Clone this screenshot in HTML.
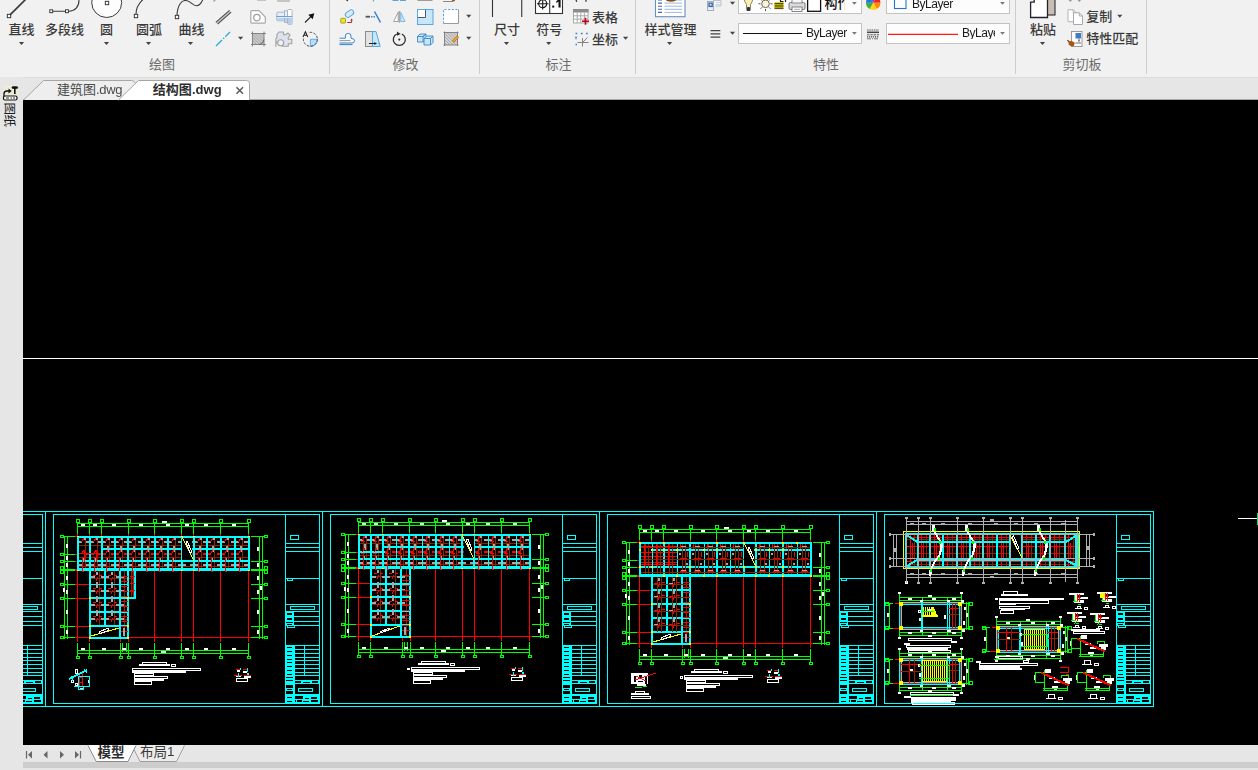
<!DOCTYPE html>
<html lang="zh"><head><meta charset="utf-8"><title>结构图.dwg</title>
<style>
html,body{margin:0;padding:0}
body{width:1258px;height:770px;overflow:hidden;position:relative;background:#e6e6e6;font-family:"Liberation Sans",sans-serif;font-size:12px;color:#222}
#ribbon{position:absolute;left:0;top:0;width:1258px;height:78px;background:#f1f1f1;border-bottom:1px solid #dcdcdc;box-sizing:border-box}
#tabs{position:absolute;left:0;top:78px;width:1258px;height:22px;background:#e6e6e6;border-bottom:1px solid #a8a8a8;box-sizing:border-box}
#side{position:absolute;left:0;top:77px;width:23px;height:693px;background:#e6e6e6}
#canvas{position:absolute;left:23px;top:100px;width:1235px;height:645px;background:#000}
#bottom{position:absolute;left:0;top:745px;width:1258px;height:25px;background:#e6e6e6}
#hscroll{position:absolute;left:23px;top:762px;width:1235px;height:6px;background:#cdcdcd}
svg.ov{position:absolute;left:0;top:0;pointer-events:none}
svg.ov text{font-family:"Liberation Sans","Noto Sans CJK SC",sans-serif}
.t{position:absolute;white-space:nowrap;line-height:1;will-change:transform}
.h{position:absolute;white-space:nowrap;color:transparent;font-size:13px;line-height:1;overflow:hidden}
</style></head><body>
<div id="ribbon"></div><div id="tabs"></div><div id="side"></div>
<div id="canvas"></div>
<div id="bottom"><div id="hscroll" style="top:17px"></div></div>
<svg class="ov" width="1258" height="770" viewBox="0 0 1258 770" shape-rendering="crispEdges">
<path d="M23 511.5H1154M23 706.5H1154M23 514.5H43M23 703.5H43M42.5 514V704M23 543.5H43M23 547.5H43M23 551.5H43M23 578.5H43M23 604.5H43M23 611.5H43M23 616.5H43M23 621.5H43M23 625.5H43M23 645.5H43M23 606.5H38M23 609.5H38M37.5 606V610M23 645.5H43M23 649.5H43M23 653.5H43M23 657.5H43M23 660.5H43M23 664.5H43M23 668.5H43M23 672.5H43M23 675.5H43M27.5 645V676M23 680.5H43M23 683.5H43M23 688.5H36M23 691.5H36M35.5 688V692M23 694.5H43M23 695.5H43M45.5 511V707M53 514.5H320M53 703.5H320M53.5 514V704M319.5 514V704M285.5 514V704M285 543.5H320M285 547.5H320M285 551.5H320M285 578.5H320M285 604.5H320M285 611.5H320M285 616.5H320M285 621.5H320M285 625.5H320M285 645.5H320M290.5 535.5H298.5V539.5H290.5ZM287.5 578.5H292.5V580.5H287.5ZM290.5 606.5H314.5V609.5H290.5ZM287.5 625.5H294.5V627.5H287.5ZM294 645.5H320M294 649.5H320M294 653.5H320M294 657.5H320M294 660.5H320M294 664.5H320M294 668.5H320M294 672.5H320M294 675.5H320M294.5 645V704M304.5 645V676M294 680.5H320M294 683.5H320M298.5 688.5H312.5V691.5H298.5ZM294 694.5H320M294 695.5H320M322.5 511V707M330 514.5H597M330 703.5H597M330.5 514V704M596.5 514V704M562.5 514V704M562 543.5H597M562 547.5H597M562 551.5H597M562 578.5H597M562 604.5H597M562 611.5H597M562 616.5H597M562 621.5H597M562 625.5H597M562 645.5H597M567.5 535.5H575.5V539.5H567.5ZM564.5 578.5H569.5V580.5H564.5ZM567.5 606.5H591.5V609.5H567.5ZM564.5 625.5H571.5V627.5H564.5ZM571 645.5H597M571 649.5H597M571 653.5H597M571 657.5H597M571 660.5H597M571 664.5H597M571 668.5H597M571 672.5H597M571 675.5H597M571.5 645V704M581.5 645V676M571 680.5H597M571 683.5H597M575.5 688.5H589.5V691.5H575.5ZM571 694.5H597M571 695.5H597M599.5 511V707M607 514.5H874M607 703.5H874M607.5 514V704M873.5 514V704M839.5 514V704M839 543.5H874M839 547.5H874M839 551.5H874M839 578.5H874M839 604.5H874M839 611.5H874M839 616.5H874M839 621.5H874M839 625.5H874M839 645.5H874M844.5 535.5H852.5V539.5H844.5ZM841.5 578.5H846.5V580.5H841.5ZM844.5 606.5H868.5V609.5H844.5ZM841.5 625.5H848.5V627.5H841.5ZM848 645.5H874M848 649.5H874M848 653.5H874M848 657.5H874M848 660.5H874M848 664.5H874M848 668.5H874M848 672.5H874M848 675.5H874M848.5 645V704M858.5 645V676M848 680.5H874M848 683.5H874M852.5 688.5H866.5V691.5H852.5ZM848 694.5H874M848 695.5H874M876.5 511V707M884 514.5H1151M884 703.5H1151M884.5 514V704M1150.5 514V704M1116.5 514V704M1116 543.5H1151M1116 547.5H1151M1116 551.5H1151M1116 578.5H1151M1116 604.5H1151M1116 611.5H1151M1116 616.5H1151M1116 621.5H1151M1116 625.5H1151M1116 645.5H1151M1121.5 535.5H1129.5V539.5H1121.5ZM1118.5 578.5H1123.5V580.5H1118.5ZM1121.5 606.5H1145.5V609.5H1121.5ZM1118.5 625.5H1125.5V627.5H1118.5ZM1125 645.5H1151M1125 649.5H1151M1125 653.5H1151M1125 657.5H1151M1125 660.5H1151M1125 664.5H1151M1125 668.5H1151M1125 672.5H1151M1125 675.5H1151M1125.5 645V704M1135.5 645V676M1125 680.5H1151M1125 683.5H1151M1129.5 688.5H1143.5V691.5H1129.5ZM1125 694.5H1151M1125 695.5H1151M1153.5 511V707" stroke="#00ffff" stroke-width="1" fill="none"/>
<path d="M23 681H42V683H23ZM23 695H42V703H23ZM285 611H294V626H285ZM285 645H294V684H285ZM294 681H319V683H294ZM285 684H294V704H285ZM294 695H319V703H294ZM562 611H571V626H562ZM562 645H571V684H562ZM571 681H596V683H571ZM562 684H571V704H562ZM571 695H596V703H571ZM839 611H848V626H839ZM839 645H848V684H839ZM848 681H873V683H848ZM839 684H848V704H839ZM848 695H873V703H848ZM1116 611H1125V626H1116ZM1116 645H1125V684H1116ZM1125 681H1150V683H1125ZM1116 684H1125V704H1116ZM1125 695H1150V703H1125Z" fill="#00ffff"/>
<path d="M23 681H24V683H23ZM26 682H33V683H26ZM35 681H41V683H35ZM23 696H26V699H23ZM34 697H40V699H34ZM28 698H32V699H28ZM23 700H25V702H23ZM26 701H32V702H26ZM34 700H41V702H34ZM287 613H292V615H287ZM287 618H292V620H287ZM286 622H293V623H286ZM287 624H292V625H287ZM287 647H292V648H287ZM287 651H292V652H287ZM287 655H292V656H287ZM287 659H292V660H287ZM287 662H292V663H287ZM287 666H292V667H287ZM287 670H292V671H287ZM287 674H292V675H287ZM286 677H293V678H286ZM286 680H293V681H286ZM295 681H301V683H295ZM303 682H310V683H303ZM312 681H318V683H312ZM286 685H293V688H286ZM287 689H292V690H287ZM286 691H293V694H286ZM287 697H292V698H287ZM287 701H292V702H287ZM295 696H303V699H295ZM311 697H317V699H311ZM305 698H309V699H305ZM295 700H296V702H295ZM297 700H302V702H297ZM303 701H309V702H303ZM311 700H318V702H311ZM564 613H569V615H564ZM564 618H569V620H564ZM563 622H570V623H563ZM564 624H569V625H564ZM564 647H569V648H564ZM564 651H569V652H564ZM564 655H569V656H564ZM564 659H569V660H564ZM564 662H569V663H564ZM564 666H569V667H564ZM564 670H569V671H564ZM564 674H569V675H564ZM563 677H570V678H563ZM563 680H570V681H563ZM572 681H578V683H572ZM580 682H587V683H580ZM589 681H595V683H589ZM563 685H570V688H563ZM564 689H569V690H564ZM563 691H570V694H563ZM564 697H569V698H564ZM564 701H569V702H564ZM572 696H580V699H572ZM588 697H594V699H588ZM582 698H586V699H582ZM572 700H573V702H572ZM574 700H579V702H574ZM580 701H586V702H580ZM588 700H595V702H588ZM841 613H846V615H841ZM841 618H846V620H841ZM840 622H847V623H840ZM841 624H846V625H841ZM841 647H846V648H841ZM841 651H846V652H841ZM841 655H846V656H841ZM841 659H846V660H841ZM841 662H846V663H841ZM841 666H846V667H841ZM841 670H846V671H841ZM841 674H846V675H841ZM840 677H847V678H840ZM840 680H847V681H840ZM849 681H855V683H849ZM857 682H864V683H857ZM866 681H872V683H866ZM840 685H847V688H840ZM841 689H846V690H841ZM840 691H847V694H840ZM841 697H846V698H841ZM841 701H846V702H841ZM849 696H857V699H849ZM865 697H871V699H865ZM859 698H863V699H859ZM849 700H850V702H849ZM851 700H856V702H851ZM857 701H863V702H857ZM865 700H872V702H865ZM1118 613H1123V615H1118ZM1118 618H1123V620H1118ZM1117 622H1124V623H1117ZM1118 624H1123V625H1118ZM1118 647H1123V648H1118ZM1118 651H1123V652H1118ZM1118 655H1123V656H1118ZM1118 659H1123V660H1118ZM1118 662H1123V663H1118ZM1118 666H1123V667H1118ZM1118 670H1123V671H1118ZM1118 674H1123V675H1118ZM1117 677H1124V678H1117ZM1117 680H1124V681H1117ZM1126 681H1132V683H1126ZM1134 682H1141V683H1134ZM1143 681H1149V683H1143ZM1117 685H1124V688H1117ZM1118 689H1123V690H1118ZM1117 691H1124V694H1117ZM1118 697H1123V698H1118ZM1118 701H1123V702H1118ZM1126 696H1134V699H1126ZM1142 697H1148V699H1142ZM1136 698H1140V699H1136ZM1126 700H1127V702H1126ZM1128 700H1133V702H1128ZM1134 701H1140V702H1134ZM1142 700H1149V702H1142Z" fill="#000000"/>
<path d="M77 523.5H249M77 526.5H249M77.5 523V534M76.5 519.5H79.5V522.5H76.5ZM89.5 523V534M88.5 519.5H91.5V522.5H88.5ZM101.5 523V534M100.5 519.5H103.5V522.5H100.5ZM128.5 523V534M127.5 519.5H130.5V522.5H127.5ZM154.5 523V534M153.5 519.5H156.5V522.5H153.5ZM181.5 523V534M180.5 519.5H183.5V522.5H180.5ZM193.5 523V534M192.5 519.5H195.5V522.5H192.5ZM220.5 523V534M219.5 519.5H222.5V522.5H219.5ZM248.5 523V534M247.5 519.5H250.5V522.5H247.5ZM77 650.5H249M77 653.5H249M77.5 643V656M76.5 656.5H79.5V658.5H76.5ZM89.5 643V656M88.5 656.5H91.5V658.5H88.5ZM120.5 643V656M119.5 656.5H122.5V658.5H119.5ZM128.5 643V656M127.5 656.5H130.5V658.5H127.5ZM154.5 643V656M153.5 656.5H156.5V658.5H153.5ZM181.5 643V656M180.5 656.5H183.5V658.5H180.5ZM193.5 643V656M192.5 656.5H195.5V658.5H192.5ZM220.5 643V656M219.5 656.5H222.5V658.5H219.5ZM248.5 643V656M247.5 656.5H250.5V658.5H247.5ZM122.5 643V652M126.5 643V652M64.5 536V639M67.5 536V639M64 536.5H75M60.5 535.5H63.5V537.5H60.5ZM64 554.5H75M60.5 553.5H63.5V555.5H60.5ZM64 561.5H75M60.5 560.5H63.5V562.5H60.5ZM60.5 566.5H63.5V569.5H60.5ZM60.5 570.5H63.5V573.5H60.5ZM64 584.5H75M60.5 583.5H63.5V585.5H60.5ZM64 598.5H75M60.5 597.5H63.5V599.5H60.5ZM64 626.5H75M60.5 625.5H63.5V627.5H60.5ZM64 637.5H75M60.5 636.5H63.5V638.5H60.5ZM259.5 536V639M262.5 536V639M251 536.5H264M264.5 535.5H267.5V537.5H264.5ZM251 561.5H264M264.5 560.5H267.5V562.5H264.5ZM264.5 566.5H267.5V569.5H264.5ZM264.5 570.5H267.5V573.5H264.5ZM251 584.5H264M264.5 583.5H267.5V585.5H264.5ZM251 598.5H264M264.5 597.5H267.5V599.5H264.5ZM251 626.5H264M264.5 625.5H267.5V627.5H264.5ZM251 637.5H264M264.5 636.5H267.5V638.5H264.5Z" stroke="#00ff00" stroke-width="1" fill="none"/>
<path d="M77.5 534V536M89.5 534V536M101.5 534V536M128.5 534V536M154.5 534V536M181.5 534V536M193.5 534V536M220.5 534V536M248.5 534V536M77.5 638V642M89.5 638V642M120.5 638V642M128.5 638V642M154.5 638V642M181.5 638V642M193.5 638V642M220.5 638V642M248.5 638V642M75 536.5H78M75 554.5H78M75 561.5H78M75 584.5H78M75 598.5H78M75 626.5H78M75 637.5H78M77.5 570V642M154.5 570V642M181.5 570V642M193.5 570V642M220.5 570V642M248.5 570V642M75 637.5H251M75 584.5H89M75 598.5H89M75 626.5H89" stroke="#ff0000" stroke-width="1" fill="none"/>
<path d="M81 524H85V526H81ZM93 524H97V526H93ZM112 524H116V526H112ZM139 524H143V526H139ZM166 524H170V526H166ZM185 524H189V526H185ZM204 524H208V526H204ZM232 524H236V526H232ZM162 521H167V523H162ZM81 648H85V650H81ZM102 648H106V650H102ZM122 648H126V650H122ZM139 648H143V650H139ZM166 648H170V650H166ZM185 648H189V650H185ZM204 648H208V650H204ZM232 648H236V650H232ZM161 651H166V653H161ZM66 544H68V548H66ZM66 556H68V560H66ZM66 563H68V567H66ZM66 576H68V580H66ZM66 590H68V594H66ZM66 610H68V614H66ZM66 630H68V634H66ZM63 588H65V592H63ZM257 547H259V551H257ZM257 563H259V567H257ZM257 576H259V580H257ZM257 590H259V594H257ZM257 610H259V614H257ZM257 630H259V634H257ZM257 563H259V567H257ZM260 586H262V590H260Z" fill="#ffffff"/>
<path d="M61 569H75V571H61ZM251 569H266V571H251Z" fill="#00ff00"/>
<path d="M75 569H77V571H75Z" fill="#ff0000"/>
<path d="M77 545.5H250M77 557.5H250M77 566.5H250M85.5 536V568M97.5 536V568M109.5 536V568M122.5 536V568M135.5 536V568M149.5 536V568M162.5 536V568M175.5 536V568M201.5 536V568M214.5 536V568M228.5 536V568M242.5 536V568" stroke="#8b2500" stroke-width="1" fill="none"/>
<path d="M86 541H94V543H86ZM86 564H94V566H86ZM98 541H106V543H98ZM98 564H106V566H98ZM111 541H119V543H111ZM111 564H119V566H111ZM124 541H132V543H124ZM124 564H132V566H124ZM138 541H146V543H138ZM138 564H146V566H138ZM151 541H159V543H151ZM151 564H159V566H151ZM164 541H172V543H164ZM164 564H172V566H164ZM178 541H186V543H178ZM178 564H186V566H178ZM190 541H198V543H190ZM190 564H198V566H190ZM203 541H211V543H203ZM203 564H211V566H203ZM217 541H225V543H217ZM217 564H225V566H217ZM231 541H239V543H231ZM231 564H239V566H231ZM78 541H82V543H78ZM244 541H249V543H244ZM78 564H82V566H78ZM244 564H249V566H244ZM83 558H84V560H83ZM95 558H96V560H95ZM107 558H108V560H107ZM120 558H121V560H120ZM133 558H134V560H133ZM147 558H148V560H147ZM160 558H161V560H160ZM173 558H174V560H173ZM199 558H200V560H199ZM212 558H213V560H212ZM226 558H227V560H226ZM240 558H241V560H240Z" fill="#a8a8a8"/>
<path d="M86 553H94V555H86ZM98 553H106V555H98ZM111 553H119V555H111ZM124 553H132V555H124ZM138 553H146V555H138ZM151 553H159V555H151ZM164 553H172V555H164ZM178 553H186V555H178ZM190 553H198V555H190ZM203 553H211V555H203ZM217 553H225V555H217ZM231 553H239V555H231Z" fill="#ff0000"/>
<path d="M77 537H250M102 549H250M77 561H250M78 536V571M90 536V571M102 536V571M115 536V571M128 536V571M142 536V571M155 536V571M168 536V571M182 536V571M194 536V571M207 536V571M221 536V571M235 536V571M249 536V571" stroke="#00ffff" stroke-width="2" fill="none"/>
<path d="M77 569.5H250" stroke="#00ffff" stroke-width="3" fill="none"/>
<path d="M182 538H192V560H182Z" fill="#000000"/>
<path d="M182 537L194 561" stroke="#ffff00" stroke-width="1" fill="none"/>
<path d="M186 542L187 541L192 552L190 553Z" stroke="#ffffff" stroke-width="1" fill="none"/>
<path d="M84 538H86V540H84ZM96 538H98V540H96ZM107 546H109V552H107ZM108 538H110V540H108ZM120 546H122V552H120ZM121 538H123V540H121ZM133 546H135V552H133ZM134 538H136V540H134ZM147 546H149V552H147ZM148 538H150V540H148ZM160 546H162V552H160ZM161 538H163V540H161ZM173 546H175V552H173ZM174 538H176V540H174ZM199 546H201V552H199ZM200 538H202V540H200ZM212 546H214V552H212ZM213 538H215V540H213ZM226 546H228V552H226ZM227 538H229V540H227ZM240 546H242V552H240ZM241 538H243V540H241Z" fill="#a8a8a8"/>
<path d="M81.5 542L84 538M81.5 554L84 550M82.5 557V572M93.5 542L96 538M93.5 554L96 550M94.5 557V572M105.5 542L108 538M105.5 554L108 550M106.5 557V572M118.5 542L121 538M118.5 554L121 550M119.5 557V572M131.5 542L134 538M131.5 554L134 550M132.5 557V572M145.5 542L148 538M145.5 554L148 550M146.5 557V572M158.5 542L161 538M158.5 554L161 550M159.5 557V572M171.5 542L174 538M171.5 554L174 550M172.5 557V572M197.5 542L200 538M197.5 554L200 550M198.5 557V572M210.5 542L213 538M210.5 554L213 550M211.5 557V572M224.5 542L227 538M224.5 554L227 550M225.5 557V572M238.5 542L241 538M238.5 554L241 550M239.5 557V572M79 553.5H101M84.5 550V562M96.5 550V562" stroke="#ff0000" stroke-width="1" fill="none"/>
<path d="M82 571H84V572H82ZM94 571H96V572H94ZM106 571H108V572H106ZM119 571H121V572H119ZM132 571H134V572H132ZM146 571H148V572H146ZM159 571H161V572H159ZM172 571H174V572H172ZM198 571H200V572H198ZM211 571H213V572H211ZM225 571H227V572H225ZM239 571H241V572H239Z" fill="#ff0000"/>
<path d="M77 536H79V537H77ZM77 570H79V571H77ZM101 536H103V537H101ZM101 570H103V571H101ZM181 536H183V537H181ZM181 570H183V571H181ZM193 536H195V537H193ZM193 570H195V571H193ZM248 536H250V537H248ZM248 570H250V571H248Z" fill="#ffff00"/>
<path d="M89 578.5H129M89 591.5H129M89 605.5H129M89 619.5H129M99.5 571V626M114.5 571V626M124.5 571V639M131.5 571V598M128 578.5H136M128 591.5H136" stroke="#8b2500" stroke-width="1" fill="none"/>
<path d="M91 576H95V578H91ZM101 576H109V578H101ZM116 576H124V578H116ZM91 590H95V592H91ZM101 590H109V592H101ZM116 590H124V592H116ZM91 604H95V606H91ZM101 604H109V606H101ZM116 604H124V606H116ZM91 618H95V620H91ZM101 618H109V620H101ZM116 618H124V620H116Z" fill="#a8a8a8"/>
<path d="M90 571V639M105 571V639M120 571V639M128 571V639M89 598H129M89 612H129M89 626H129M89 638H129M135 571V599M128 598H136" stroke="#00ffff" stroke-width="2" fill="none"/>
<path d="M89 584.5H129" stroke="#00ffff" stroke-width="1" fill="none"/>
<path d="M130 576.5H135M130 583.5H135M130 590.5H135M133.5 571V597" stroke="#ff0000" stroke-width="1" fill="none"/>
<path d="M91 627H119V637H91Z" fill="#000000"/>
<path d="M91 636L119 628" stroke="#ffff00" stroke-width="1" fill="none"/>
<path d="M99 632L108 628L109 630L100 634Z" stroke="#ffffff" stroke-width="1" fill="none"/>
<path d="M121 576.5H128M121 581.5H128M121 586.5H128M121 591.5H128M121 596.5H128M121 601.5H128M121 606.5H128M121 611.5H128M121 616.5H128M121 621.5H128M121 626.5H128M121 631.5H128M96 581L98 577M96 594L98 590M96 608L98 604M96 622L98 618M111 581L113 577M111 594L113 590M111 608L113 604M111 622L113 618" stroke="#ff0000" stroke-width="1" fill="none"/>
<path d="M123 628H125V636H123ZM96 572H98V575H96ZM96 582H98V588H96ZM96 596H98V602H96ZM96 610H98V616H96ZM111 572H113V575H111ZM111 582H113V588H111ZM111 596H113V602H111ZM111 610H113V616H111Z" fill="#a8a8a8"/>
<path d="M93 575H96V576H93ZM99 575H102V576H99ZM93 588H96V589H93ZM99 588H102V589H99ZM93 602H96V603H93ZM99 602H102V603H99ZM93 616H96V617H93ZM99 616H102V617H99ZM108 575H111V576H108ZM114 575H117V576H114ZM108 588H111V589H108ZM114 588H117V589H114ZM108 602H111V603H108ZM114 602H117V603H114ZM108 616H111V617H108ZM114 616H117V617H114Z" fill="#ff0000"/>
<path d="M89 597H91V599H89ZM89 625H91V627H89ZM89 637H91V639H89ZM127 597H129V599H127ZM127 625H129V627H127ZM127 637H129V639H127Z" fill="#ffff00"/>
<path d="M142.5 662.5H166.5V664.5H142.5ZM171.5 664.5H175.5V666.5H171.5ZM132.5 668.5H200.5V670.5H132.5ZM134.5 673.5H153.5V675.5H134.5ZM134.5 676.5H167.5V678.5H134.5ZM134.5 681.5H151.5V684.5H134.5ZM236.5 678.5H247.5V681.5H236.5ZM75.5 669.5H77.5V673.5H75.5ZM75.5 683.5H77.5V685.5H75.5ZM71.5 680.5H73.5V682.5H71.5Z" stroke="#ffffff" stroke-width="1" fill="none"/>
<path d="M139 664H170V666H139ZM132 671H186V673H132ZM134 678H164V681H134ZM237 670H240V672H237ZM243 671H247V673H243ZM236 676H241V677H236ZM244 676H251V678H244ZM80 688H83V690H80ZM88 680H90V683H88Z" fill="#ffffff"/>
<path d="M236 669H240V670H236ZM243 669H248V670H243ZM234 675H242V676H234ZM244 675H251V676H244ZM79 674H80V686H79ZM82 673H83V686H82ZM79 677H83V678H79ZM79 682H83V683H79Z" fill="#ff0000"/>
<path d="M240 668H241V670H240ZM247 668H248V672H247ZM238 673H239V677H238ZM247 673H249V675H247Z" fill="#00ffff"/>
<path d="M69 679L87 670" stroke="#00ffff" stroke-width="2" fill="none"/>
<path d="M71 676L73 681M84 669L87 673M78.5 676.5H89.5V686.5H78.5ZM74 686.5H79M78.5 686.5H83.5V689.5H78.5Z" stroke="#00ffff" stroke-width="1" fill="none"/>
<path d="M358 522.5H530M358 525.5H530M358.5 522V533M357.5 518.5H360.5V521.5H357.5ZM370.5 522V533M369.5 518.5H372.5V521.5H369.5ZM382.5 522V533M381.5 518.5H384.5V521.5H381.5ZM409.5 522V533M408.5 518.5H411.5V521.5H408.5ZM435.5 522V533M434.5 518.5H437.5V521.5H434.5ZM462.5 522V533M461.5 518.5H464.5V521.5H461.5ZM474.5 522V533M473.5 518.5H476.5V521.5H473.5ZM501.5 522V533M500.5 518.5H503.5V521.5H500.5ZM529.5 522V533M528.5 518.5H531.5V521.5H528.5ZM358 649.5H530M358 652.5H530M358.5 642V655M357.5 655.5H360.5V657.5H357.5ZM370.5 642V655M369.5 655.5H372.5V657.5H369.5ZM402.5 642V655M401.5 655.5H404.5V657.5H401.5ZM410.5 642V655M409.5 655.5H412.5V657.5H409.5ZM435.5 642V655M434.5 655.5H437.5V657.5H434.5ZM462.5 642V655M461.5 655.5H464.5V657.5H461.5ZM474.5 642V655M473.5 655.5H476.5V657.5H473.5ZM501.5 642V655M500.5 655.5H503.5V657.5H500.5ZM529.5 642V655M528.5 655.5H531.5V657.5H528.5ZM404.5 642V651M407.5 642V651M345.5 534V638M348.5 534V638M345 534.5H356M341.5 533.5H344.5V535.5H341.5ZM345 552.5H356M341.5 551.5H344.5V553.5H341.5ZM345 559.5H356M341.5 558.5H344.5V560.5H341.5ZM341.5 564.5H344.5V567.5H341.5ZM341.5 568.5H344.5V571.5H341.5ZM345 583.5H356M341.5 582.5H344.5V584.5H341.5ZM345 597.5H356M341.5 596.5H344.5V598.5H341.5ZM345 624.5H356M341.5 623.5H344.5V625.5H341.5ZM345 636.5H356M341.5 635.5H344.5V637.5H341.5ZM540.5 534V638M543.5 534V638M532 534.5H545M545.5 533.5H548.5V535.5H545.5ZM532 559.5H545M545.5 558.5H548.5V560.5H545.5ZM545.5 564.5H548.5V567.5H545.5ZM545.5 568.5H548.5V571.5H545.5ZM532 583.5H545M545.5 582.5H548.5V584.5H545.5ZM532 597.5H545M545.5 596.5H548.5V598.5H545.5ZM532 624.5H545M545.5 623.5H548.5V625.5H545.5ZM532 636.5H545M545.5 635.5H548.5V637.5H545.5Z" stroke="#00ff00" stroke-width="1" fill="none"/>
<path d="M358.5 533V535M370.5 533V535M382.5 533V535M409.5 533V535M435.5 533V535M462.5 533V535M474.5 533V535M501.5 533V535M529.5 533V535M358.5 637V641M370.5 637V641M402.5 637V641M410.5 637V641M435.5 637V641M462.5 637V641M474.5 637V641M501.5 637V641M529.5 637V641M356 534.5H359M356 552.5H359M356 559.5H359M356 583.5H359M356 597.5H359M356 624.5H359M356 636.5H359M358.5 568V641M435.5 568V641M462.5 568V641M474.5 568V641M501.5 568V641M529.5 568V641M356 636.5H532M356 583.5H370M356 597.5H370M356 624.5H370" stroke="#ff0000" stroke-width="1" fill="none"/>
<path d="M362 523H366V525H362ZM374 523H378V525H374ZM394 523H398V525H394ZM420 523H424V525H420ZM446 523H450V525H446ZM466 523H470V525H466ZM486 523H490V525H486ZM513 523H517V525H513ZM442 520H447V522H442ZM362 647H366V649H362ZM384 647H388V649H384ZM404 647H408V649H404ZM420 647H424V649H420ZM446 647H450V649H446ZM466 647H470V649H466ZM486 647H490V649H486ZM513 647H517V649H513ZM441 650H446V652H441ZM347 542H349V546H347ZM347 554H349V558H347ZM347 561H349V565H347ZM347 575H349V579H347ZM347 588H349V592H347ZM347 609H349V613H347ZM347 629H349V633H347ZM344 587H346V591H344ZM538 545H540V549H538ZM538 561H540V565H538ZM538 575H540V579H538ZM538 588H540V592H538ZM538 609H540V613H538ZM538 629H540V633H538ZM538 561H540V565H538ZM541 585H543V589H541Z" fill="#ffffff"/>
<path d="M342 567H356V569H342ZM532 567H547V569H532Z" fill="#00ff00"/>
<path d="M356 567H358V569H356Z" fill="#ff0000"/>
<path d="M358 543.5H531M358 555.5H531M358 564.5H531M366.5 534V566M363.5 534V566M378.5 534V566M375.5 534V566M390.5 534V566M387.5 534V566M403.5 534V566M400.5 534V566M416.5 534V566M413.5 534V566M429.5 534V566M426.5 534V566M443.5 534V566M440.5 534V566M456.5 534V566M453.5 534V566M481.5 534V566M478.5 534V566M495.5 534V566M492.5 534V566M509.5 534V566M506.5 534V566M523.5 534V566M520.5 534V566" stroke="#8b2500" stroke-width="1" fill="none"/>
<path d="M367 539H375V541H367ZM367 562H375V564H367ZM379 539H387V541H379ZM379 562H387V564H379ZM392 539H400V541H392ZM392 562H400V564H392ZM405 539H413V541H405ZM405 562H413V564H405ZM418 539H426V541H418ZM418 562H426V564H418ZM432 539H440V541H432ZM432 562H440V564H432ZM445 539H453V541H445ZM445 562H453V564H445ZM458 539H466V541H458ZM458 562H466V564H458ZM470 539H478V541H470ZM470 562H478V564H470ZM484 539H492V541H484ZM484 562H492V564H484ZM498 539H506V541H498ZM498 562H506V564H498ZM512 539H520V541H512ZM512 562H520V564H512ZM359 539H363V541H359ZM525 539H530V541H525ZM359 562H363V564H359ZM525 562H530V564H525ZM364 556H365V558H364ZM376 556H377V558H376ZM388 556H389V558H388ZM401 556H402V558H401ZM414 556H415V558H414ZM427 556H428V558H427ZM441 556H442V558H441ZM454 556H455V558H454ZM479 556H480V558H479ZM493 556H494V558H493ZM507 556H508V558H507ZM521 556H522V558H521Z" fill="#a8a8a8"/>
<path d="M367 551H375V553H367ZM379 551H387V553H379ZM392 551H400V553H392ZM405 551H413V553H405ZM418 551H426V553H418ZM432 551H440V553H432ZM445 551H453V553H445ZM458 551H466V553H458ZM470 551H478V553H470ZM484 551H492V553H484ZM498 551H506V553H498ZM512 551H520V553H512Z" fill="#ff0000"/>
<path d="M358 535H531M383 547H531M358 552H385M358 559H531M359 534V569M371 534V569M383 534V569M409 534V569M436 534V569M462 534V569M474 534V569M502 534V569M530 534V569" stroke="#00ffff" stroke-width="2" fill="none"/>
<path d="M358 567.5H531" stroke="#00ffff" stroke-width="3" fill="none"/>
<path d="M396.5 534V569M422.5 534V569M449.5 534V569M488.5 534V569M516.5 534V569" stroke="#00ffff" stroke-width="1" fill="none"/>
<path d="M464 536H474V558H464Z" fill="#000000"/>
<path d="M462 535L474 559" stroke="#ffff00" stroke-width="1" fill="none"/>
<path d="M466 540L468 539L472 550L471 551Z" stroke="#ffffff" stroke-width="1" fill="none"/>
<path d="M364 544H366V550H364ZM365 536H367V538H365ZM376 544H378V550H376ZM377 536H379V538H377ZM388 544H390V550H388ZM389 536H391V538H389ZM401 544H403V550H401ZM402 536H404V538H402ZM414 544H416V550H414ZM415 536H417V538H415ZM427 544H429V550H427ZM428 536H430V538H428ZM441 544H443V550H441ZM442 536H444V538H442ZM454 544H456V550H454ZM455 536H457V538H455ZM479 544H481V550H479ZM480 536H482V538H480ZM493 544H495V550H493ZM494 536H496V538H494ZM507 544H509V550H507ZM508 536H510V538H508ZM521 544H523V550H521ZM522 536H524V538H522Z" fill="#a8a8a8"/>
<path d="M362.5 540L365 536M362.5 552L365 548M363.5 555V570M374.5 540L377 536M374.5 552L377 548M375.5 555V570M386.5 540L389 536M386.5 552L389 548M387.5 555V570M399.5 540L402 536M399.5 552L402 548M400.5 555V570M412.5 540L415 536M412.5 552L415 548M413.5 555V570M425.5 540L428 536M425.5 552L428 548M426.5 555V570M439.5 540L442 536M439.5 552L442 548M440.5 555V570M452.5 540L455 536M452.5 552L455 548M453.5 555V570M477.5 540L480 536M477.5 552L480 548M478.5 555V570M491.5 540L494 536M491.5 552L494 548M492.5 555V570M505.5 540L508 536M505.5 552L508 548M506.5 555V570M519.5 540L522 536M519.5 552L522 548M520.5 555V570" stroke="#ff0000" stroke-width="1" fill="none"/>
<path d="M363 569H365V570H363ZM361 541H365V542H361ZM361 553H365V554H361ZM375 569H377V570H375ZM373 541H377V542H373ZM373 553H377V554H373ZM387 569H389V570H387ZM385 541H389V542H385ZM385 553H389V554H385ZM400 569H402V570H400ZM398 541H402V542H398ZM398 553H402V554H398ZM413 569H415V570H413ZM411 541H415V542H411ZM411 553H415V554H411ZM426 569H428V570H426ZM424 541H428V542H424ZM424 553H428V554H424ZM440 569H442V570H440ZM438 541H442V542H438ZM438 553H442V554H438ZM453 569H455V570H453ZM451 541H455V542H451ZM451 553H455V554H451ZM478 569H480V570H478ZM476 541H480V542H476ZM476 553H480V554H476ZM492 569H494V570H492ZM490 541H494V542H490ZM490 553H494V554H490ZM506 569H508V570H506ZM504 541H508V542H504ZM504 553H508V554H504ZM520 569H522V570H520ZM518 541H522V542H518ZM518 553H522V554H518Z" fill="#ff0000"/>
<path d="M358 534H360V535H358ZM358 568H360V569H358ZM382 534H384V535H382ZM382 568H384V569H382ZM461 534H463V535H461ZM461 568H463V569H461ZM473 534H475V535H473ZM473 568H475V569H473ZM529 534H531V535H529ZM529 568H531V569H529Z" fill="#ffff00"/>
<path d="M370 576.5H411M370 590.5H411M370 604.5H411M370 618.5H411M380.5 569V625M395.5 569V625M406.5 569V638" stroke="#8b2500" stroke-width="1" fill="none"/>
<path d="M372 576H376V578H372ZM382 576H390V578H382ZM397 576H405V578H397ZM372 589H376V591H372ZM382 589H390V591H382ZM397 589H405V591H397ZM372 602H376V604H372ZM382 602H390V604H382ZM397 602H405V604H397ZM372 616H376V618H372ZM382 616H390V618H382ZM397 616H405V618H397Z" fill="#a8a8a8"/>
<path d="M371 569V638M386 569V638M401 569V638M410 569V638M370 584H411M370 597H411M370 611H411M370 625H411M370 637H411" stroke="#00ffff" stroke-width="2" fill="none"/>
<path d="M372 626H400V636H372Z" fill="#000000"/>
<path d="M372 636L400 626" stroke="#ffff00" stroke-width="1" fill="none"/>
<path d="M380 632L389 628L390 629L381 633Z" stroke="#ffffff" stroke-width="1" fill="none"/>
<path d="M402 575.5H410M402 580.5H410M402 585.5H410M402 590.5H410M402 595.5H410M402 600.5H410M402 605.5H410M402 610.5H410M402 615.5H410M402 620.5H410M402 625.5H410M402 630.5H410M377 579L379 575M377 594L379 590M377 607L379 603M377 621L379 617M392 579L394 575M392 594L394 590M392 607L394 603M392 621L394 617" stroke="#ff0000" stroke-width="1" fill="none"/>
<path d="M404 627H406V635H404ZM377 570H379V573H377ZM377 582H379V588H377ZM377 595H379V601H377ZM377 609H379V615H377ZM392 570H394V573H392ZM392 582H394V588H392ZM392 595H394V601H392ZM392 609H394V615H392Z" fill="#a8a8a8"/>
<path d="M374 573H377V574H374ZM380 573H383V574H380ZM374 588H377V589H374ZM380 588H383V589H380ZM374 601H377V602H374ZM380 601H383V602H380ZM374 615H377V616H374ZM380 615H383V616H380ZM389 573H392V574H389ZM395 573H398V574H395ZM389 588H392V589H389ZM395 588H398V589H395ZM389 601H392V602H389ZM395 601H398V602H395ZM389 615H392V616H389ZM395 615H398V616H395Z" fill="#ff0000"/>
<path d="M370 596H372V598H370ZM370 624H372V626H370ZM370 636H372V638H370ZM409 596H411V598H409ZM409 624H411V626H409ZM409 636H411V638H409Z" fill="#ffff00"/>
<path d="M421.5 661.5H445.5V663.5H421.5ZM450.5 663.5H454.5V665.5H450.5ZM411.5 667.5H479.5V669.5H411.5ZM413.5 672.5H432.5V674.5H413.5ZM413.5 675.5H446.5V677.5H413.5ZM413.5 680.5H430.5V683.5H413.5ZM511.5 677.5H522.5V680.5H511.5Z" stroke="#ffffff" stroke-width="1" fill="none"/>
<path d="M418 663H449V665H418ZM411 670H465V672H411ZM413 677H443V680H413ZM407 668H410V670H407ZM512 669H515V671H512ZM518 670H522V672H518ZM511 675H516V676H511ZM519 675H526V677H519Z" fill="#ffffff"/>
<path d="M511 668H515V669H511ZM518 668H523V669H518ZM509 674H517V675H509ZM519 674H526V675H519Z" fill="#ff0000"/>
<path d="M515 667H516V669H515ZM522 667H523V671H522ZM513 672H514V676H513ZM522 672H524V674H522Z" fill="#00ffff"/>
<path d="M639 529.5H811M639 532.5H811M639.5 529V540M638.5 525.5H641.5V528.5H638.5ZM651.5 529V540M650.5 525.5H653.5V528.5H650.5ZM663.5 529V540M662.5 525.5H665.5V528.5H662.5ZM690.5 529V540M689.5 525.5H692.5V528.5H689.5ZM716.5 529V540M715.5 525.5H718.5V528.5H715.5ZM743.5 529V540M742.5 525.5H745.5V528.5H742.5ZM755.5 529V540M754.5 525.5H757.5V528.5H754.5ZM782.5 529V540M781.5 525.5H784.5V528.5H781.5ZM810.5 529V540M809.5 525.5H812.5V528.5H809.5ZM639 656.5H811M639 659.5H811M639.5 649V662M638.5 662.5H641.5V664.5H638.5ZM651.5 649V662M650.5 662.5H653.5V664.5H650.5ZM682.5 649V662M681.5 662.5H684.5V664.5H681.5ZM690.5 649V662M689.5 662.5H692.5V664.5H689.5ZM716.5 649V662M715.5 662.5H718.5V664.5H715.5ZM743.5 649V662M742.5 662.5H745.5V664.5H742.5ZM755.5 649V662M754.5 662.5H757.5V664.5H754.5ZM782.5 649V662M781.5 662.5H784.5V664.5H781.5ZM810.5 649V662M809.5 662.5H812.5V664.5H809.5ZM684.5 649V658M688.5 649V658M626.5 542V645M629.5 542V645M626 542.5H637M622.5 541.5H625.5V543.5H622.5ZM626 560.5H637M622.5 559.5H625.5V561.5H622.5ZM626 567.5H637M622.5 566.5H625.5V568.5H622.5ZM622.5 572.5H625.5V575.5H622.5ZM622.5 576.5H625.5V579.5H622.5ZM626 590.5H637M622.5 589.5H625.5V591.5H622.5ZM626 604.5H637M622.5 603.5H625.5V605.5H622.5ZM626 632.5H637M622.5 631.5H625.5V633.5H622.5ZM626 643.5H637M622.5 642.5H625.5V644.5H622.5ZM821.5 542V645M824.5 542V645M813 542.5H826M826.5 541.5H829.5V543.5H826.5ZM813 567.5H826M826.5 566.5H829.5V568.5H826.5ZM826.5 572.5H829.5V575.5H826.5ZM826.5 576.5H829.5V579.5H826.5ZM813 590.5H826M826.5 589.5H829.5V591.5H826.5ZM813 604.5H826M826.5 603.5H829.5V605.5H826.5ZM813 632.5H826M826.5 631.5H829.5V633.5H826.5ZM813 643.5H826M826.5 642.5H829.5V644.5H826.5Z" stroke="#00ff00" stroke-width="1" fill="none"/>
<path d="M639.5 540V542M651.5 540V542M663.5 540V542M690.5 540V542M716.5 540V542M743.5 540V542M755.5 540V542M782.5 540V542M810.5 540V542M639.5 644V648M651.5 644V648M682.5 644V648M690.5 644V648M716.5 644V648M743.5 644V648M755.5 644V648M782.5 644V648M810.5 644V648M637 542.5H640M637 560.5H640M637 567.5H640M637 590.5H640M637 604.5H640M637 632.5H640M637 643.5H640M639.5 576V648M716.5 576V648M743.5 576V648M755.5 576V648M782.5 576V648M810.5 576V648M637 643.5H813M637 590.5H651M637 604.5H651M637 632.5H651" stroke="#ff0000" stroke-width="1" fill="none"/>
<path d="M643 530H647V532H643ZM655 530H659V532H655ZM674 530H678V532H674ZM701 530H705V532H701ZM728 530H732V532H728ZM747 530H751V532H747ZM766 530H770V532H766ZM794 530H798V532H794ZM724 527H729V529H724ZM643 654H647V656H643ZM664 654H668V656H664ZM684 654H688V656H684ZM701 654H705V656H701ZM728 654H732V656H728ZM747 654H751V656H747ZM766 654H770V656H766ZM794 654H798V656H794ZM723 657H728V659H723ZM628 550H630V554H628ZM628 562H630V566H628ZM628 569H630V573H628ZM628 582H630V586H628ZM628 596H630V600H628ZM628 616H630V620H628ZM628 636H630V640H628ZM625 594H627V598H625ZM819 553H821V557H819ZM819 569H821V573H819ZM819 582H821V586H819ZM819 596H821V600H819ZM819 616H821V620H819ZM819 636H821V640H819ZM819 569H821V573H819ZM822 592H824V596H822Z" fill="#ffffff"/>
<path d="M623 575H637V577H623ZM813 575H828V577H813Z" fill="#00ff00"/>
<path d="M637 575H639V577H637Z" fill="#ff0000"/>
<path d="M639 543H812M652 550H812M639 567H812M640 542V577M664 542V577M690 542V577M717 542V577M744 542V577M756 542V577M783 542V577M811 542V577" stroke="#00ffff" stroke-width="2" fill="none"/>
<path d="M639 575.5H812" stroke="#00ffff" stroke-width="3" fill="none"/>
<path d="M652.5 542V577M677.5 542V577M704.5 542V577M730.5 542V577M769.5 542V577M797.5 542V577" stroke="#00ffff" stroke-width="1" fill="none"/>
<path d="M641 547.5H810M641 559.5H810M641 572.5H810M645.5 544V574M648.5 544V574M657.5 544V574M660.5 544V574M669.5 544V574M672.5 544V574M682.5 544V574M685.5 544V574M695.5 544V574M698.5 544V574M708.5 544V574M712.5 544V574M722.5 544V574M725.5 544V574M735.5 544V574M738.5 544V574M760.5 544V574M764.5 544V574M774.5 544V574M777.5 544V574M788.5 544V574M791.5 544V574M802.5 544V574M805.5 544V574" stroke="#8b2500" stroke-width="1" fill="none"/>
<path d="M744 544H754V566H744Z" fill="#000000"/>
<path d="M744 543L756 567" stroke="#ffff00" stroke-width="1" fill="none"/>
<path d="M748 548L749 547L754 558L752 559Z" stroke="#ffffff" stroke-width="1" fill="none"/>
<path d="M641 546.5H652M641 552.5H652M641 556.5H652M641 562.5H652M641 564.5H652M644.5 544V566M653 546.5H664M653 552.5H664M653 556.5H664M653 562.5H664M653 564.5H664M656.5 544V566M665 546.5H677M665 552.5H677M665 556.5H677M665 562.5H677M665 564.5H677M668.5 544V566M680.5 544V549M687.5 552V557M693.5 544V549M701.5 552V557M707.5 544V549M714.5 552V557M720.5 544V549M727.5 552V557M733.5 544V549M741.5 552V557M759.5 544V549M766.5 552V557M772.5 544V549M780.5 552V557M786.5 544V549M794.5 552V557M800.5 544V549M808.5 552V557" stroke="#ff0000" stroke-width="1" fill="none"/>
<path d="M680 558H687V559H680ZM680 571H687V572H680ZM694 558H701V559H694ZM694 571H701V572H694ZM707 558H714V559H707ZM707 571H714V572H707ZM720 558H727V559H720ZM720 571H727V572H720ZM734 558H741V559H734ZM734 571H741V572H734ZM759 558H766V559H759ZM759 571H766V572H759ZM773 558H780V559H773ZM773 571H780V572H773ZM787 558H794V559H787ZM787 571H794V572H787ZM801 558H808V559H801ZM801 571H808V572H801Z" fill="#ff0000"/>
<path d="M681 546H686V547H681ZM681 570H686V571H681ZM679 553H681V555H679ZM686 563H688V565H686ZM695 546H700V547H695ZM695 570H700V571H695ZM692 553H694V555H692ZM700 563H702V565H700ZM708 546H713V547H708ZM708 570H713V571H708ZM706 553H708V555H706ZM713 563H715V565H713ZM721 546H726V547H721ZM721 570H726V571H721ZM719 553H721V555H719ZM726 563H728V565H726ZM735 546H740V547H735ZM735 570H740V571H735ZM732 553H734V555H732ZM740 563H742V565H740ZM760 546H765V547H760ZM760 570H765V571H760ZM758 553H760V555H758ZM765 563H767V565H765ZM774 546H779V547H774ZM774 570H779V571H774ZM771 553H773V555H771ZM779 563H781V565H779ZM788 546H793V547H788ZM788 570H793V571H788ZM785 553H787V555H785ZM793 563H795V565H793ZM802 546H807V547H802ZM802 570H807V571H802ZM799 553H801V555H799ZM807 563H809V565H807Z" fill="#a8a8a8"/>
<path d="M639 542H641V544H639ZM639 549H641V551H639ZM639 566H641V568H639ZM651 549H653V551H651ZM651 566H653V568H651ZM663 542H665V544H663ZM663 549H665V551H663ZM663 575H665V577H663ZM676 549H678V551H676ZM676 575H678V577H676ZM689 566H691V568H689ZM703 549H705V551H703ZM703 575H705V577H703ZM716 542H718V544H716ZM716 549H718V551H716ZM716 575H718V577H716ZM743 542H745V544H743ZM743 566H745V568H743ZM755 549H757V551H755ZM755 566H757V568H755ZM755 575H757V577H755ZM768 549H770V551H768ZM768 575H770V577H768ZM782 542H784V544H782ZM782 549H784V551H782ZM782 566H784V568H782ZM782 575H784V577H782ZM796 542H798V544H796ZM810 575H812V577H810Z" fill="#ffff00"/>
<path d="M651 584.5H691M651 597.5H691M651 611.5H691M651 625.5H691M661.5 577V632M676.5 577V632M686.5 577V645" stroke="#8b2500" stroke-width="1" fill="none"/>
<path d="M652 577V645M667 577V645M682 577V645M690 577V645M651 590H691M651 604H691M651 618H691M651 632H691M651 644H691" stroke="#00ffff" stroke-width="2" fill="none"/>
<path d="M653 584.5H689M653 597.5H689M653 611.5H689M653 625.5H689M657.5 577V632M661.5 577V632M672.5 577V632M676.5 577V632" stroke="#8b2500" stroke-width="1" fill="none"/>
<path d="M653 633H681V643H653Z" fill="#000000"/>
<path d="M653 642L681 634" stroke="#ffff00" stroke-width="1" fill="none"/>
<path d="M661 638L670 634L671 636L662 640Z" stroke="#ffffff" stroke-width="1" fill="none"/>
<path d="M683 582.5H690M683 587.5H690M683 592.5H690M683 597.5H690M683 602.5H690M683 607.5H690M683 612.5H690M683 617.5H690M683 622.5H690M683 627.5H690M683 632.5H690M683 637.5H690M658 587L660 582M658 600L660 595M658 614L660 609M658 628L660 623M673 587L675 582M673 600L675 595M673 614L675 609M673 628L675 623" stroke="#ff0000" stroke-width="1" fill="none"/>
<path d="M685 634H687V642H685ZM658 578H660V581H658ZM658 591H660V594H658ZM654 596H658V597H654ZM658 605H660V608H658ZM658 619H660V622H658ZM654 624H658V625H654ZM673 578H675V581H673ZM669 583H673V584H669ZM673 591H675V594H673ZM673 605H675V608H673ZM669 610H673V611H669ZM673 619H675V622H673Z" fill="#a8a8a8"/>
<path d="M654 583H658V584H654ZM662 582H665V583H662ZM662 595H665V596H662ZM654 610H658V611H654ZM662 609H665V610H662ZM662 623H665V624H662ZM677 582H680V583H677ZM669 596H673V597H669ZM677 595H680V596H677ZM677 609H680V610H677ZM669 624H673V625H669ZM677 623H680V624H677Z" fill="#ff0000"/>
<path d="M651 603H653V605H651ZM651 631H653V633H651ZM651 643H653V645H651ZM689 603H691V605H689ZM689 631H691V633H689ZM689 643H691V645H689Z" fill="#ffff00"/>
<path d="M694.5 669.5H718.5V671.5H694.5ZM723.5 671.5H727.5V673.5H723.5ZM684.5 675.5H752.5V677.5H684.5ZM686.5 680.5H705.5V682.5H686.5ZM686.5 683.5H719.5V685.5H686.5ZM686.5 688.5H703.5V691.5H686.5ZM680.5 676.5H682.5V678.5H680.5ZM767.5 679.5H778.5V682.5H767.5ZM635.5 691.5H644.5V693.5H635.5ZM631.5 696.5H650.5V698.5H631.5Z" stroke="#ffffff" stroke-width="1" fill="none"/>
<path d="M691 671H722V673H691ZM684 678H738V680H684ZM686 685H716V688H686ZM768 671H771V673H768ZM774 672H778V674H774ZM767 677H772V678H767ZM775 677H782V679H775ZM631 673H648V684H631ZM637 684H646V686H637ZM631 693H649V695H631Z" fill="#ffffff"/>
<path d="M767 670H771V671H767ZM774 670H779V671H774ZM765 676H773V677H765ZM775 676H782V677H775Z" fill="#ff0000"/>
<path d="M771 669H772V671H771ZM778 669H779V673H778ZM769 674H770V678H769ZM778 674H780V676H778Z" fill="#00ffff"/>
<path d="M634 676H636V682H634ZM639 675H642V679H639ZM645 677H647V684H645ZM638 681H643V682H638Z" fill="#000000"/>
<path d="M635 680L656 673M636 676L646 681" stroke="#ff0000" stroke-width="1" fill="none"/>
<path d="M635 687H642V688H635ZM643 686H647V687H643Z" fill="#00ff00"/>
<path d="M905 517H908V519H905ZM905 582H908V584H905ZM917 517H920V519H917ZM917 582H920V584H917ZM929 517H932V519H929ZM929 582H932V584H929ZM956 517H959V519H956ZM956 582H959V584H956ZM982 517H985V519H982ZM982 582H985V584H982ZM1009 517H1012V519H1009ZM1009 582H1012V584H1009ZM1021 517H1024V519H1021ZM1021 582H1024V584H1021ZM1049 517H1052V519H1049ZM1049 582H1052V584H1049ZM1076 517H1079V519H1076ZM1076 582H1079V584H1076ZM889 533H891V536H889ZM1093 533H1095V536H1093ZM889 557H891V560H889ZM1093 557H1095V560H1093ZM889 565H891V568H889ZM1093 565H1095V568H1093ZM910 523H914V524H910ZM910 573H914V575H910ZM922 523H926V524H922ZM922 573H926V575H922ZM941 523H945V524H941ZM941 573H945V575H941ZM968 523H972V524H968ZM968 573H972V575H968ZM994 523H998V524H994ZM994 573H998V575H994ZM1014 523H1018V524H1014ZM1014 573H1018V575H1014ZM1034 523H1038V524H1034ZM1034 573H1038V575H1034ZM1061 523H1065V524H1061ZM1061 573H1065V575H1061ZM990 519H994V521H990ZM990 576H994V578H990ZM894 548H896V552H894ZM1087 546H1090V550H1087Z" fill="#b0b0b0"/>
<path d="M905.5 581.5H907.5V583.5H905.5Z" stroke="#ffffff" stroke-width="1" fill="none"/>
<path d="M906 539.5H1078M906 553.5H1078M906 564.5H1078M914.5 534V567M926.5 534V567M939.5 534V567M952.5 534V567M966.5 534V567M979.5 534V567M992.5 534V567M1006.5 534V567M1031.5 534V567M1045.5 534V567M1059.5 534V567M1073.5 534V567" stroke="#8b2500" stroke-width="1" fill="none"/>
<path d="M906 537.5H1078M906 546.5H1078M906 561.5H1078M910.5 534V567M912.5 543V559M921.5 534V567M923.5 543V559M934.5 534V567M936.5 543V559M947.5 534V567M949.5 543V559M961.5 534V567M963.5 543V559M974.5 534V567M976.5 543V559M987.5 534V567M989.5 543V559M1001.5 534V567M1003.5 543V559M1026.5 534V567M1028.5 543V559M1040.5 534V567M1042.5 543V559M1054.5 534V567M1056.5 543V559M1068.5 534V567M1070.5 543V559" stroke="#ff0000" stroke-width="1" fill="none"/>
<path d="M905.5 533.5H1078.5V567.5H905.5ZM906 534.5H1078M906 566.5H1078M917.5 534V567M1064.5 534V567" stroke="#00ffff" stroke-width="1" fill="none"/>
<path d="M917 542H1066M917 560H1066M930 534V567M943 534V567M957 534V567M970 534V567M983 534V567M997 534V567M1010 534V567M1022 534V567M1036 534V567M1050 534V567M907 535L917 542M907 566L917 560M1077 535L1066 542M1077 566L1066 560M1076 534V567" stroke="#00ffff" stroke-width="2" fill="none"/>
<path d="M903.5 531.5H1079.5V568.5H903.5Z" stroke="#ffff00" stroke-width="1" fill="none"/>
<path d="M906.5 518V583M918.5 518V583M930.5 518V583M957.5 518V583M983.5 518V583M1010.5 518V583M1022.5 518V583M1050.5 518V583M1077.5 518V583M1065.5 520V582M906 521.5H1078M906 524.5H1078M906 574.5H1078M906 577.5H1078M889 534.5H1095M889 558.5H1095M889 566.5H1095M893.5 534V567M896.5 534V567M1086.5 534V567M1089.5 534V567" stroke="#b0b0b0" stroke-width="1" fill="none"/>
<path d="M1011 536H1021V558H1011Z" fill="#000000"/>
<path d="M1010 535L1022 558" stroke="#ffff00" stroke-width="1" fill="none"/>
<path d="M1012 537L1013.5 536L1019 548L1017.5 549ZM933 525L934 532L939 540L941 548L939 555L934 562L931 568L930 574M934 525L935 532L940 540L942 548L940 555L935 562L932 568L931 574M966 525L967 532L972 540L974 548L972 555L967 562L964 568L963 574M967 525L968 532L973 540L975 548L973 555L968 562L965 568L964 574M1038 525L1039 532L1044 540L1046 548L1044 555L1039 562L1036 568L1035 574M1039 525L1040 532L1045 540L1047 548L1045 555L1040 562L1037 568L1036 574" stroke="#ffffff" stroke-width="1" fill="none"/>
<path d="M932 525H934V531H932ZM929 570H931V576H929ZM941 543H943V548H941ZM965 525H967V531H965ZM962 570H964V576H962ZM974 543H976V548H974ZM1037 525H1039V531H1037ZM1034 570H1036V576H1034ZM1046 543H1048V548H1046Z" fill="#ffffff"/>
<path d="M934 528H936V531H934ZM930 569H932V572H930ZM939 541H941V544H939ZM938 557H940V560H938ZM967 528H969V531H967ZM963 569H965V572H963ZM972 541H974V544H972ZM971 557H973V560H971ZM1039 528H1041V531H1039ZM1035 569H1037V572H1035ZM1044 541H1046V544H1044ZM1043 557H1045V560H1043Z" fill="#00ff00"/>
<path d="M899.5 593V638M961.5 593V638M899 597.5H962M899 600.5H962M899 632.5H962M899 635.5H962M922.5 597V603M922.5 629V635M947.5 597V603M947.5 629V635M889.5 603V629M886 603.5H893M886 628.5H893M885.5 602.5H888.5V605.5H885.5ZM885.5 626.5H888.5V629.5H885.5ZM966.5 602V630M968.5 602V630M962 603.5H969M962 628.5H969M969.5 602.5H972.5V605.5H969.5ZM969.5 626.5H972.5V629.5H969.5Z" stroke="#00ff00" stroke-width="1" fill="none"/>
<path d="M908 598H912V600H908ZM908 632H912V634H908ZM932 598H936V600H932ZM932 632H936V634H932ZM952 598H956V600H952ZM952 632H956V634H952ZM928 595H932V597H928ZM928 635H932V637H928ZM898 592H901V594H898ZM960 592H963V594H960ZM898 637H901V639H898ZM960 637H963V639H960ZM887 613H889V617H887ZM964 607H966V610H964ZM966 613H968V617H966ZM963 621H965V625H963Z" fill="#ffffff"/>
<path d="M895 603.5H962M893 628.5H962M900.5 602V630M960.5 602V630" stroke="#ff0000" stroke-width="1" fill="none"/>
<path d="M899.5 602.5H961.5V629.5H899.5ZM901.5 604.5H959.5V627.5H901.5ZM947.5 602V630M949.5 602V630" stroke="#00ffff" stroke-width="1" fill="none"/>
<path d="M922 602V630" stroke="#00ffff" stroke-width="2" fill="none"/>
<path d="M952.5 603V629M948 608.5H959" stroke="#ff0000" stroke-width="1" fill="none"/>
<path d="M955.5 604V628M948 614.5H959" stroke="#8b2500" stroke-width="1" fill="none"/>
<path d="M923.5 607V615M925.5 607V615M927.5 607V615M929.5 607V615M931.5 607V615M933.5 607V615" stroke="#ffff00" stroke-width="1" fill="none"/>
<path d="M932 607L935 610L937 615L932 615ZM922 615H938V617H922ZM899 602H903V606H899ZM958 602H962V606H958ZM899 626H903V630H899ZM958 626H962V630H958Z" fill="#ffff00"/>
<path d="M920 611.5H934" stroke="#00ff00" stroke-width="1" fill="none"/>
<path d="M918.5 610.5H920.5V612.5H918.5Z" stroke="#ffffff" stroke-width="1" fill="none"/>
<path d="M928 609H931V611H928ZM919 618H921V621H919ZM944 615H946V619H944ZM920 600H923V602H920ZM947 600H950V602H947ZM920 630H923V632H920ZM947 630H951V632H947ZM961 600H964V603H961ZM962 629H965V632H962Z" fill="#ffffff"/>
<path d="M899.5 649V693M961.5 649V693M899 653.5H962M899 656.5H962M899 687.5H962M899 690.5H962M922.5 653V659M922.5 684V690M947.5 653V659M947.5 684V690M889.5 659V684M886 659.5H893M886 683.5H893M885.5 658.5H888.5V661.5H885.5ZM885.5 681.5H888.5V684.5H885.5ZM966.5 658V685M968.5 658V685M962 659.5H969M962 683.5H969M969.5 658.5H972.5V661.5H969.5ZM969.5 681.5H972.5V684.5H969.5Z" stroke="#00ff00" stroke-width="1" fill="none"/>
<path d="M908 654H912V656H908ZM908 687H912V689H908ZM932 654H936V656H932ZM932 687H936V689H932ZM952 654H956V656H952ZM952 687H956V689H952ZM928 651H932V653H928ZM928 690H932V692H928ZM898 648H901V650H898ZM960 648H963V650H960ZM898 692H901V694H898ZM960 692H963V694H960ZM887 669H889V673H887ZM964 663H966V666H964ZM966 669H968V673H966ZM963 676H965V680H963Z" fill="#ffffff"/>
<path d="M895 659.5H962M893 683.5H962M900.5 658V685M960.5 658V685" stroke="#ff0000" stroke-width="1" fill="none"/>
<path d="M899.5 658.5H961.5V684.5H899.5ZM901.5 660.5H959.5V682.5H901.5ZM947.5 658V685M949.5 658V685" stroke="#00ffff" stroke-width="1" fill="none"/>
<path d="M922 658V685" stroke="#00ffff" stroke-width="2" fill="none"/>
<path d="M952.5 659V684M948 664.5H959M909.5 660V683M901 664.5H922" stroke="#ff0000" stroke-width="1" fill="none"/>
<path d="M955.5 660V683M948 670.5H959M914.5 660V683M901 671.5H922" stroke="#8b2500" stroke-width="1" fill="none"/>
<path d="M910 669H913V671H910ZM931 662H933V665H931ZM936 674H939V676H936ZM918 664H920V667H918ZM919 673H921V677H919ZM920 656H923V658H920ZM947 656H950V658H947ZM920 685H923V687H920ZM947 685H951V687H947ZM961 656H964V659H961ZM962 684H965V687H962Z" fill="#ffffff"/>
<path d="M922 660H947V682H922ZM922 670H947V672H922ZM899 658H903V662H899ZM958 658H962V662H958ZM899 681H903V685H899ZM958 681H962V685H958Z" fill="#ffff00"/>
<path d="M923.5 661V681M925.5 661V681M927.5 661V681M929.5 661V681M931.5 661V681M933.5 661V681M935.5 661V681M937.5 661V681M939.5 661V681M941.5 661V681M943.5 661V681M945.5 661V681" stroke="#000000" stroke-width="1" fill="none"/>
<path d="M919 665.5H950M919 678.5H950M949.5 665V679" stroke="#00ff00" stroke-width="1" fill="none"/>
<path d="M996.5 617V661M1060.5 617V661M996 621.5H1061M996 624.5H1061M996 655.5H1061M996 658.5H1061M1020.5 621V627M1020.5 652V658M1046.5 621V627M1046.5 652V658M986.5 627V652M983 627.5H990M983 651.5H990M982.5 626.5H985.5V629.5H982.5ZM982.5 649.5H985.5V652.5H982.5ZM1065.5 626V653M1067.5 626V653M1061 627.5H1068M1061 651.5H1068M1068.5 626.5H1071.5V629.5H1068.5ZM1068.5 649.5H1071.5V652.5H1068.5Z" stroke="#00ff00" stroke-width="1" fill="none"/>
<path d="M1006 622H1010V624H1006ZM1006 655H1010V657H1006ZM1031 622H1035V624H1031ZM1031 655H1035V657H1031ZM1051 622H1055V624H1051ZM1051 655H1055V657H1051ZM1026 619H1030V621H1026ZM1026 658H1030V660H1026ZM995 616H998V618H995ZM1059 616H1062V618H1059ZM995 660H998V662H995ZM1059 660H1062V662H1059ZM984 637H986V641H984ZM1063 631H1065V634H1063ZM1065 637H1067V641H1065ZM1062 644H1064V648H1062Z" fill="#ffffff"/>
<path d="M992 627.5H1061M990 651.5H1061M997.5 626V653M1059.5 626V653" stroke="#ff0000" stroke-width="1" fill="none"/>
<path d="M996.5 626.5H1060.5V652.5H996.5ZM998.5 628.5H1058.5V650.5H998.5ZM1046.5 626V653M1048.5 626V653" stroke="#00ffff" stroke-width="1" fill="none"/>
<path d="M1020 626V653" stroke="#00ffff" stroke-width="2" fill="none"/>
<path d="M1051.5 627V652M1047 632.5H1058M1006.5 628V651M998 632.5H1020" stroke="#ff0000" stroke-width="1" fill="none"/>
<path d="M1054.5 628V651M1047 638.5H1058M1011.5 628V651M998 639.5H1020" stroke="#8b2500" stroke-width="1" fill="none"/>
<path d="M1007 637H1010V639H1007ZM1033 631H1035V634H1033ZM1038 643H1041V645H1038ZM1020 633H1022V636H1020ZM1021 642H1023V646H1021ZM1018 624H1021V626H1018ZM1046 624H1049V626H1046ZM1018 653H1021V655H1018ZM1046 653H1050V655H1046ZM1060 624H1063V627H1060ZM1061 652H1064V655H1061Z" fill="#ffffff"/>
<path d="M1024 629H1045V650H1024ZM1024 638H1045V640H1024ZM996 626H1000V630H996ZM1057 626H1061V630H1057ZM996 649H1000V653H996ZM1057 649H1061V653H1057Z" fill="#ffff00"/>
<path d="M1025.5 630V649M1027.5 630V649M1029.5 630V649M1031.5 630V649M1033.5 630V649M1035.5 630V649M1037.5 630V649M1039.5 630V649M1041.5 630V649M1043.5 630V649" stroke="#000000" stroke-width="1" fill="none"/>
<path d="M1021 634.5H1048M1021 646.5H1048M1047.5 634V647" stroke="#00ff00" stroke-width="1" fill="none"/>
<path d="M908.5 638.5H951.5V640.5H908.5ZM906.5 645.5H950.5V647.5H906.5ZM907.5 648.5H947.5V649.5H907.5ZM908.5 650.5H950.5V652.5H908.5ZM910.5 692.5H953.5V694.5H910.5ZM912.5 702.5H954.5V704.5H912.5ZM1003.5 591.5H1017.5V594.5H1003.5ZM999.5 600.5H1048.5V603.5H999.5ZM999.5 606.5H1029.5V608.5H999.5ZM1000.5 610.5H1013.5V613.5H1000.5ZM998.5 656.5H1022.5V658.5H998.5ZM1023.5 660.5H1028.5V662.5H1023.5ZM979.5 663.5H1037.5V665.5H979.5ZM979.5 668.5H1021.5V669.5H979.5Z" stroke="#ffffff" stroke-width="1" fill="none"/>
<path d="M951 641H957V643H951ZM904 643H910V645H904ZM953 694H959V696H953ZM904 696H911V698H904ZM911 697H956V701H911ZM911 701H951V703H911ZM1001 594H1028V596H1001ZM995 598H998V600H995ZM999 598H1064V600H999ZM999 603H1016V605H999ZM1001 608H1025V610H1001ZM995 656H999V658H995ZM976 661H981V663H976ZM979 665H1020V668H979Z" fill="#ffffff"/>
<path d="M910 695.5H953M994 659.5H1023" stroke="#00ff00" stroke-width="1" fill="none"/>
<path d="M1069 593H1084V595H1069ZM1074 595H1078V603H1074ZM1078 597H1088V599H1078ZM1078 600H1084V603H1078ZM1075 608H1082V609H1075ZM1097 592H1112V594H1097ZM1102 594H1106V602H1102ZM1106 596H1116V598H1106ZM1106 599H1112V602H1106ZM1103 607H1110V608H1103ZM1067 612H1082V614H1067ZM1072 614H1076V622H1072ZM1076 616H1086V618H1076ZM1076 619H1082V622H1076ZM1073 627H1080V628H1073ZM1090 613H1105V615H1090ZM1095 615H1099V623H1095ZM1099 617H1109V619H1099ZM1099 620H1105V623H1099ZM1096 628H1103V629H1096ZM1071 629H1100V631H1071ZM1070 641H1072V646H1070ZM1081 635H1087V639H1081ZM1085 643H1091V645H1085ZM1090 647H1097V649H1090ZM1099 644H1108V647H1099ZM1101 647H1106V650H1101ZM1088 652H1094V654H1088ZM1090 655H1093V657H1090ZM1082 664H1092V665H1082ZM1034 675H1036V680H1034ZM1045 669H1051V673H1045ZM1049 677H1055V679H1049ZM1054 681H1061V683H1054ZM1063 678H1072V681H1063ZM1065 681H1070V684H1065ZM1052 686H1058V688H1052ZM1054 689H1057V691H1054ZM1046 698H1056V699H1046ZM1076 675H1078V680H1076ZM1087 669H1093V673H1087ZM1091 677H1097V679H1091ZM1096 681H1103V683H1096ZM1105 678H1114V681H1105ZM1107 681H1112V684H1107ZM1094 686H1100V688H1094ZM1096 689H1099V691H1096ZM1088 698H1098V699H1088Z" fill="#ffffff"/>
<path d="M1077 594H1078V602H1077ZM1079 594H1080V602H1079ZM1077 597H1081V598H1077ZM1105 593H1106V601H1105ZM1107 593H1108V601H1107ZM1105 596H1109V597H1105ZM1101 594H1104V597H1101ZM1075 613H1076V621H1075ZM1077 613H1078V621H1077ZM1075 616H1079V617H1075ZM1098 614H1099V622H1098ZM1100 614H1101V622H1100ZM1098 617H1102V618H1098ZM1060 667H1069V668H1060ZM1068 667H1069V672H1068ZM1060 672H1069V673H1060ZM1066 674H1069V676H1066Z" fill="#ff0000"/>
<path d="M1074.5 595V602M1073 601.5H1078M1102.5 594V601M1101 600.5H1106M1072.5 614V621M1071 620.5H1076M1074 624L1077 621M1095.5 615V622M1094 621.5H1099M1097 625L1100 622M1071 638.5H1080M1071.5 638V649M1071 648.5H1080M1080.5 636V657M1079 654.5H1104M1079 656.5H1104M1103.5 649V657M1097 641.5H1105M1097.5 641V644M1104.5 641V644M1035 672.5H1044M1035.5 672V683M1035 682.5H1044M1044.5 670V691M1043 688.5H1068M1043 690.5H1068M1067.5 683V691M1061 675.5H1069M1061.5 675V678M1068.5 675V678M1077 672.5H1086M1077.5 672V683M1077 682.5H1086M1086.5 670V691M1085 688.5H1110M1085 690.5H1110M1109.5 683V691M1103 675.5H1111M1103.5 675V678M1110.5 675V678" stroke="#00ff00" stroke-width="1" fill="none"/>
<path d="M1078 604H1081V605H1078ZM1106 603H1109V604H1106ZM1076 623H1079V624H1076ZM1099 624H1102V625H1099Z" fill="#00ff00"/>
<path d="M1077.5 606.5H1080.5V608.5H1077.5ZM1084.5 607.5H1087.5V609.5H1084.5ZM1105.5 605.5H1108.5V607.5H1105.5ZM1112.5 606.5H1115.5V608.5H1112.5ZM1075.5 625.5H1078.5V627.5H1075.5ZM1082.5 626.5H1085.5V628.5H1082.5ZM1098.5 626.5H1101.5V628.5H1098.5ZM1105.5 627.5H1108.5V629.5H1105.5ZM1073.5 631.5H1104.5V633.5H1073.5ZM1084.5 660.5H1090.5V664.5H1084.5ZM1094.5 663.5H1098.5V665.5H1094.5ZM1048.5 694.5H1054.5V698.5H1048.5ZM1058.5 697.5H1062.5V699.5H1058.5ZM1090.5 694.5H1096.5V698.5H1090.5ZM1100.5 697.5H1104.5V699.5H1100.5Z" stroke="#ffffff" stroke-width="1" fill="none"/>
<path d="M1100 593H1105V598H1100Z" fill="#ffff00"/>
<path d="M1077 638L1105 651M1077 639L1105 652M1041 672L1069 685M1041 673L1069 686M1083 672L1111 685M1083 673L1111 686" stroke="#ff0000" stroke-width="1" fill="none"/>
<path d="M23 358.5H1258M1238 518.5H1258" stroke="#ffffff" stroke-width="1" fill="none"/>
<path d="M1257.5 513V525" stroke="#00e070" stroke-width="1" fill="none"/>
</svg>
<svg class="ov" width="1258" height="770" viewBox="0 0 1258 770">
<path d="M329.5 0V74" stroke="#cdcdcd" stroke-width="1"/>
<path d="M479.5 0V74" stroke="#cdcdcd" stroke-width="1"/>
<path d="M635.5 0V74" stroke="#cdcdcd" stroke-width="1"/>
<path d="M1015.5 0V74" stroke="#cdcdcd" stroke-width="1"/>
<path d="M1146.5 0V74" stroke="#cdcdcd" stroke-width="1"/>
<path d="M8.8 16.2L27 -2" stroke="#3c3c3c" stroke-width="1.7"/><rect x="7.30" y="14.30" width="3.4" height="3.4" fill="#fff" stroke="#2b2b2b" stroke-width=".9"/>
<path d="M53 11.2H65M69 11.2C75 11.2 79 7 79 0" stroke="#3c3c3c" stroke-width="1.1" fill="none"/><rect x="49.80" y="9.80" width="2.9" height="2.9" fill="#fff" stroke="#2b2b2b" stroke-width=".9"/><rect x="65.50" y="9.80" width="2.9" height="2.9" fill="#fff" stroke="#2b2b2b" stroke-width=".9"/>
<circle cx="106.7" cy="2.5" r="15" fill="#fdfdfd" stroke="#3c3c3c" stroke-width="1"/><rect x="105.30" y="1.30" width="3.4" height="3.4" fill="#fff" stroke="#2b2b2b" stroke-width=".9"/>
<path d="M136 14C136 8 139 3 143.5 -1" stroke="#3c3c3c" stroke-width="1.1" fill="none"/><rect x="134.30" y="14.30" width="3.4" height="3.4" fill="#fff" stroke="#2b2b2b" stroke-width=".9"/>
<path d="M177 15C177.5 6 181 0 186 0.5S192.5 6 196.5 5.8S202 2 203.5 -2" stroke="#3c3c3c" stroke-width="1.1" fill="none"/><rect x="175.30" y="15.30" width="3.4" height="3.4" fill="#fff" stroke="#2b2b2b" stroke-width=".9"/>
<text x="8.5" y="34" font-size="13" font-weight="500" fill="#3a3a3a">直线</text>
<text x="45" y="34" font-size="13" font-weight="500" fill="#3a3a3a">多段线</text>
<text x="100" y="34" font-size="13" font-weight="500" fill="#3a3a3a">圆</text>
<text x="136" y="34" font-size="13" font-weight="500" fill="#3a3a3a">圆弧</text>
<text x="178.5" y="34" font-size="13" font-weight="500" fill="#3a3a3a">曲线</text>
<path d="M18.90 42.00h5.20l-2.60 3.00z" fill="#444"/>
<path d="M103.90 42.00h5.20l-2.60 3.00z" fill="#444"/>
<path d="M145.90 42.00h5.20l-2.60 3.00z" fill="#444"/>
<path d="M187.90 42.00h5.20l-2.60 3.00z" fill="#444"/>
<text x="149" y="69" font-size="13" fill="#6b6b6b">绘图</text>
<path d="M216.7 23.3L230.3 11.2" stroke="#c4c4c4" stroke-width="2.200"/><path d="M215.800 22.400L229.500 10.300M217.600 24.200L231.200 12.100" stroke="#4a4a4a" stroke-width="1.050"/>
<path d="M251.800 10.700h7.200l6.300 6.300v5.200q0 1-1 1h-12.500q-1 0-1-1v-10.500q0-1 1-1z" fill="#fff" stroke="#a9a9a9" stroke-width="1.200"/><circle cx="256.900" cy="17.600" r="3.200" fill="#fff" stroke="#9d9d9d" stroke-width="1.200"/>
<rect x="276.800" y="12.200" width="8" height="8.600" rx="1" fill="#e6eef9" stroke="#a3aec0" stroke-width=".9"/><rect x="277.300" y="17" width="7.500" height="3.400" fill="#bfd2ec"/><rect x="284.500" y="10.800" width="3.200" height="11.600" fill="#e6eef9" stroke="#a3aec0" stroke-width=".9"/><rect x="285" y="17" width="2.500" height="5" fill="#bfd2ec"/><rect x="287.500" y="9.500" width="4.600" height="14.800" rx="1" fill="#fff" stroke="#a3aec0" stroke-width=".9"/><rect x="288" y="17" width="3.600" height="6.900" fill="#b9cce6"/><path d="M276.400 16.500H292.300" stroke="#5b9be0" stroke-width="1"/><path d="M277.300 17.400H291.800" stroke="#fff" stroke-width=".7"/>
<path d="M305 22.5L311 16.5" stroke="#222" stroke-width="1.1"/><path d="M314.3 13.2l-1.6 6-4.4-4.4z" fill="#111"/>
<path d="M216 46L230 32" stroke="#29abe2" stroke-width="1.300" stroke-dasharray="8.600 1.500 1.600 1.500"/><path d="M238.00 36.80h5.20l-2.60 3.00z" fill="#444"/>
<defs><pattern id="hat" width="2.2" height="2.2" patternUnits="userSpaceOnUse" patternTransform="rotate(-45)"><rect width="2.2" height="2.2" fill="#d2d2d2"/><rect width=".9" height="2.2" fill="#a2a2a2"/></pattern><pattern id="hat2" width="2.2" height="2.2" patternUnits="userSpaceOnUse" patternTransform="rotate(-45)"><rect width="2.2" height="2.2" fill="#dadada"/><rect width=".9" height="2.2" fill="#a8a8a8"/></pattern></defs>
<rect x="252.5" y="33.5" width="11.5" height="11" fill="url(#hat)"/><path d="M251 33.5h15M251 44.5h15M252.5 31.5v15M264 31.5v15" stroke="#7a7a7a" stroke-width=".9"/><path d="M259 44.5q4.5-.5 5-5" stroke="#666" fill="none" stroke-width=".9"/>
<path d="M279 32h4.500v2.800h2.200l2.200-1.800 2.200 2.200-1.800 2.200v1.900h3.500v4.400h-3.500v2.500h-6.300a3.300 3.300 0 1 0-6.200-.6l.3.600h-.2v-7.600l1-1v-3z" fill="#dde3ee" stroke="#a2a2a2" stroke-width="1.100" stroke-linejoin="round"/><circle cx="280.700" cy="42.800" r="3" fill="#f1f1f1" stroke="#a2a2a2" stroke-width="1.100"/>
<path d="M310.400 39.300h7a7 7 0 0 1-7 7z" fill="#b5e0fa" stroke="#5aa7e0" stroke-width=".9"/><circle cx="310.400" cy="39.300" r="7" fill="none" stroke="#3a3a3a" stroke-width=".9" stroke-dasharray="2.600 1.400"/><rect x="302.300" y="31.800" width="6.200" height="6" fill="#f1f1f1"/><path d="M303 37l2.400-5.200 2.400 5.200M303.900 35.300h3" stroke="#222" stroke-width="1.050" fill="none"/>
<path d="M213.5 1.5l3-3M257 0h9M277 1h13" stroke="#999" stroke-width="1.2"/>
<rect x="340.7" y="18.3" width="4.8" height="4.8" rx="1" fill="#f7e700" stroke="#8a8a3a" stroke-width=".8"/><rect x="345" y="11" width="9" height="5.2" rx="2.6" transform="rotate(-35 349.5 13.6)" fill="#d4ecfb" stroke="#5aa7e0" stroke-width="1"/><path d="M347.3 22.5h4.3v-2.3" stroke="#a82828" stroke-width="1" fill="none"/><path d="M350.3 20.6l1.3-2 1.3 2z" fill="#a82828"/>
<path d="M365.6 16.7h4.4" stroke="#555" stroke-width="1.8"/><path d="M371 16.7h4" stroke="#3b86d6" stroke-width="1.6" stroke-dasharray="1.5 1"/><path d="M374.5 11.5L380.5 22.5" stroke="#2f7fd0" stroke-width="1.5"/>
<path d="M393.6 21.5l4.6-9.3v9.3z" fill="#fff" stroke="#9a9a9a" stroke-width=".9"/><rect x="398.6" y="11" width="1.6" height="11.7" fill="#a6a6a6"/><path d="M400.8 12.5l4.2 9h-4.2z" fill="#cfe8fa" stroke="#6cb4ea" stroke-width=".9"/>
<rect x="417.5" y="9.5" width="15.5" height="15" fill="#c6e6fb" stroke="#5aa7e0"/><path d="M418 10h7.5v7.500h-7.500z" fill="#fff"/><path d="M425.5 10v7.500h-7.500" stroke="#555" fill="none"/>
<rect x="443.5" y="9.5" width="15" height="14" fill="#fff"/><path d="M443.5 23.5v-14h15" stroke="#5aa7e0" stroke-dasharray="2.2 1.5" fill="none"/><path d="M443.5 23.5h15v-14" stroke="#9a9a9a" fill="none"/><path d="M466.15 14.80h5.20l-2.60 3.00z" fill="#444"/>
<path d="M339.500 38.200H345.400V36Q345.400 33.400 348.200 33.400Q351 33.400 351 36V38.200Q354.600 38.600 354.600 40.700Q354.600 43 352 43H339.500" fill="#f6f9fd" stroke="#3d84c6" stroke-width="1"/><path d="M339.500 40.600H350.500" stroke="#8a8a8a" stroke-width=".9"/><path d="M339.500 44.600H352.500" stroke="#3d84c6" stroke-width="1"/>
<rect x="365.5" y="31.500" width="7" height="15" fill="#e2e2e2" stroke="#8a8a8a"/><path d="M372.500 31.500h3.500l4.200 15h-7.700z" fill="#c6e6fb" stroke="#5aa7e0"/><path d="M369 43.500h6" stroke="#222" stroke-width="1"/><path d="M377 43.500l-2.600-1.600v3.200z" fill="#222"/><path d="M378.5 43.5h1" stroke="#3d84c6"/>
<path d="M401.800 34a6 6 0 1 1-5 0" fill="none" stroke="#2e2e2e" stroke-width="1.300"/><path d="M400.700 34l-3.700-2.400v4.200z" fill="#2e2e2e"/><circle cx="399.300" cy="39.600" r="1.100" fill="#2e2e2e"/>
<g fill="#c6e6fb" stroke="#3d84c6" stroke-width=".9" stroke-linejoin="round"><path d="M417.500 36.500h5.500v5.500h-5.500zM417.500 36.500l2.500-2.500h6l-3 2.500M423 36.500l3-2.500v5.500l-3 2.500"/><path d="M424 38.500h6.500v6.500h-6.500zM424 38.500l2.500-2.500h6.500l-2.500 2.500M430.500 38.500l2.500-2.500v6.500l-2.500 2.500"/></g>
<rect x="444.500" y="32.500" width="13" height="12.500" fill="url(#hat2)"/><path d="M443.500 32.500h15M443.500 45h15M444.500 31.500v14.500M457.500 31.500v14.500" stroke="#7a7a7a" stroke-width=".9"/><path d="M453.200 42.300l-.6-2 4.600-4.600 1.600 1.600-4.600 4.600z" fill="#f0a030" stroke="#a8680f" stroke-width=".6"/><path d="M466.15 36.80h5.20l-2.60 3.00z" fill="#444"/>
<path d="M346 0l1.200 1.500 1.200-1.500z" fill="#333"/><path d="M373.500 0v1.500M392.500 0.500h6M400 .5h6" stroke="#5aa7e0" stroke-width="1.200"/><path d="M417.500 0.300h15M443 1.500h10" stroke="#888" stroke-width="1"/><circle cx="453.500" cy="0" r="1.600" fill="#9a5a20"/>
<text x="392.5" y="69" font-size="13" fill="#6b6b6b">修改</text>
<path d="M492.500 0V17M521.750 0V17" stroke="#333" stroke-width="1.100"/>
<rect x="535.500" y="-5" width="27" height="18.500" fill="#fff" stroke="#333" stroke-width="1.100"/><path d="M549.700 -5v18.500" stroke="#333" stroke-width="1.100"/><circle cx="542.700" cy="3.700" r="4" fill="none" stroke="#1a1a1a" stroke-width="1.200"/><path d="M537 3.700h11.500M542.700 -2v11.500" stroke="#1a1a1a" stroke-width="1.100"/>
<rect x="552.2" y="5.6" width="2" height="2" fill="#111"/><path d="M556.3 1.300l2.600-2.300h1.700v8.600h-2.100v-6.200l-2.200 1.600z" fill="#111"/>
<text x="494" y="34" font-size="13" font-weight="500" fill="#3a3a3a">尺寸</text>
<text x="536.3" y="34" font-size="13" font-weight="500" fill="#3a3a3a">符号</text>
<path d="M503.90 42.00h5.20l-2.60 3.00z" fill="#444"/><path d="M546.10 42.00h5.20l-2.60 3.00z" fill="#444"/>
<path d="M576 0l.8 1.800M586 0v1.800" stroke="#333" stroke-width="1.300"/>
<rect x="573.500" y="9.500" width="14.500" height="13.500" fill="#fff" stroke="#a9a9a9"/><rect x="573" y="9" width="15.500" height="3.500" fill="#8c8c8c"/><path d="M577.200 12.500v10.500M580.800 12.500v10.500M584.400 12.500v10.500M573.500 15.800h14.500M573.500 19.200h14.500" stroke="#a2a2a2" stroke-width=".9"/><path d="M582 21.200h7M585.500 17.800v7" stroke="#c2001f" stroke-width="1.600"/>
<text x="592" y="21.5" font-size="13" font-weight="500" fill="#3a3a3a">表格</text>
<text x="592" y="43.5" font-size="13" font-weight="500" fill="#3a3a3a">坐标</text>
<path d="M623.00 36.80h5.20l-2.60 3.00z" fill="#444"/>
<path d="M582.500 38v8.500M577.500 42.500h11M582.500 42.500l5-5" stroke="#858585" stroke-width="1" fill="none"/><path d="M575.500 33.500h1.800M580.800 33.500h1.800M586 33.500h1.800M575.500 44.500h1.500" stroke="#3d84c6" stroke-width="1.600"/><path d="M575 36.500l1 1.500 1-1.500M576 38v1.500" stroke="#3d84c6" stroke-width=".9" fill="none"/>
<text x="545.6" y="69" font-size="13" fill="#6b6b6b">标注</text>
<rect x="655.500" y="-5" width="29.500" height="21.700" fill="#fff" stroke="#6a8fc0" stroke-width="1.100"/><path d="M658 0h4M658 3.100h4M658 6.200h4M658 9.300h4M658 12.400h4" stroke="#3a6aa8" stroke-width="1.100"/><path d="M664.500 3.100h17.500M664.500 6.200h17.500M664.500 9.300h17.500M664.500 12.400h17.500M673 0h9" stroke="#9db9dd" stroke-width="1"/><ellipse cx="671" cy="-.8" rx="5.500" ry="2.500" fill="#8a4a10"/>
<text x="644.4" y="34" font-size="13" font-weight="500" fill="#3a3a3a">样式管理</text>
<path d="M667.00 42.00h5.20l-2.60 3.00z" fill="#444"/>
<path d="M713 0.500h8v5.500h-6" fill="#f4f6fa" stroke="#b4bdcc" stroke-width=".9"/><path d="M716 2.500h5M716 4.500h5" stroke="#c5ccd8" stroke-width=".8"/><rect x="707.500" y="1.500" width="6" height="9" fill="#e8edf5" stroke="#9aa6b8" stroke-width=".9"/><rect x="708.300" y="2.500" width="4.600" height="4.600" fill="#3d6fb5"/><circle cx="710.600" cy="4.800" r="1" fill="#dfe9f8"/><path d="M729.90 1.80h5.20l-2.60 3.00z" fill="#444"/>
<path d="M710.500 30.700h9.800M710.500 33.900h9.800M710.500 37.200h9.800" stroke="#444" stroke-width="1.300"/><path d="M729.90 31.80h5.20l-2.60 3.00z" fill="#444"/>
<rect x="738.5" y="-7.5" width="123.0" height="21.0" fill="#fdfdfd" stroke="#c3c3c3"/><rect x="738.5" y="23.5" width="123.0" height="20.0" fill="#fdfdfd" stroke="#c3c3c3"/><rect x="886.5" y="-7.5" width="123.0" height="21.0" fill="#fdfdfd" stroke="#c3c3c3"/><rect x="886.5" y="23.5" width="123.0" height="20.0" fill="#fdfdfd" stroke="#c3c3c3"/>
<path d="M852.00 1.90h4.80l-2.40 2.80z" fill="#777"/>
<path d="M852.00 31.90h4.80l-2.40 2.80z" fill="#777"/>
<path d="M1000.10 1.90h4.80l-2.40 2.80z" fill="#777"/>
<path d="M1000.10 31.90h4.80l-2.40 2.80z" fill="#777"/>
<path d="M744.300 -1a4.200 4.600 0 0 1 8.400 0q0 2.500-2.200 5.500v3h-4v-3q-2.200-3-2.200-5.500z" fill="#fbf0b4" stroke="#77705a" stroke-width=".9"/><rect x="746.500" y="7.300" width="4" height="3.700" rx="1" fill="#333"/>
<circle cx="765.500" cy="3.800" r="3.800" fill="#fdf5d3" stroke="#555" stroke-width=".9"/><path d="M758.500 3.800h2M770.500 3.800h2M765.500 9v2.200M760.500 8.800l1.500-1.500M770.500 8.800l-1.500-1.500M760.500 -1l1.500 1.300M770.500 -1l-1.500 1.300" stroke="#444" stroke-width=".9"/>
<rect x="774.500" y="2" width="9" height="7" fill="#e9dc00"/><path d="M774.500 3.500h9M774.500 5.200h9M774.500 6.900h9M774.500 8.600h9" stroke="#222" stroke-width=".8"/><path d="M780.500 -1v2.500h3M785.500 -1v3" stroke="#222" stroke-width="1.200" fill="none"/>
<rect x="789" y="2.500" width="16" height="7" rx="1.500" fill="#d9dde2" stroke="#666" stroke-width=".9"/><rect x="792" y="-3" width="10" height="6" fill="#f6f6f6" stroke="#777" stroke-width=".8"/><rect x="792" y="7" width="10" height="4.500" fill="#fff" stroke="#666" stroke-width=".8"/><path d="M794 9.300h6" stroke="#999" stroke-width=".8"/>
<rect x="807.600" y="-5" width="13" height="16.300" fill="#fff" stroke="#111" stroke-width="1.300"/>
<clipPath id="cl1"><rect x="820" y="-5" width="24.600" height="20"/></clipPath><g clip-path="url(#cl1)">
<text x="824.4" y="8.3" font-size="13" font-weight="500" fill="#111">构作</text>
</g>
<path d="M873.20 2.80L869.60 -3.44A7.2 7.2 0 0 1 876.80 -3.44Z" fill="#8a3fd6"/>
<path d="M873.20 2.80L876.80 -3.44A7.2 7.2 0 0 1 880.40 2.80Z" fill="#e8232a"/>
<path d="M873.20 2.80L880.40 2.80A7.2 7.2 0 0 1 876.80 9.04Z" fill="#ff8a00"/>
<path d="M873.20 2.80L876.80 9.04A7.2 7.2 0 0 1 869.60 9.04Z" fill="#ffd21a"/>
<path d="M873.20 2.80L869.60 9.04A7.2 7.2 0 0 1 866.00 2.80Z" fill="#38b33c"/>
<path d="M873.20 2.80L866.00 2.80A7.2 7.2 0 0 1 869.60 -3.44Z" fill="#2a6fe0"/>
<rect x="894.500" y="-4" width="11.500" height="12.500" fill="#fff" stroke="#1f76d2" stroke-width="1.100"/>
<path d="M743 33.500h59" stroke="#111" stroke-width="1.100"/>
<path d="M867 30h12" stroke="#555" stroke-width="1" stroke-dasharray="1.500 .8"/><path d="M867 32.300h12" stroke="#444" stroke-width="1.500"/><path d="M867 34.800h12" stroke="#555" stroke-width="1" stroke-dasharray="2.500 .8"/><path d="M867 36.800h12" stroke="#444" stroke-width="1.300" stroke-dasharray="1.200 .8"/><path d="M867 38.800h12" stroke="#666" stroke-width=".9" stroke-dasharray="4 1 1 1"/>
<path d="M888 34.400h70" stroke="#ff1a1a" stroke-width="1.300"/>
<text x="813" y="69" font-size="13" fill="#6b6b6b">特性</text>
<rect x="1046.500" y="-5" width="8.500" height="20" fill="#c8bdb3" stroke="#2b2b36" stroke-width="1.100"/><path d="M1030.600 17.500V2.200h3.600V-4h13.300V17.500z" fill="#fff" stroke="#23232e" stroke-width="1.300"/>
<text x="1030" y="34" font-size="13" font-weight="500" fill="#3a3a3a">粘贴</text>
<path d="M1039.90 42.00h5.20l-2.60 3.00z" fill="#444"/>
<path d="M1068.500 0l1.800 2 1.800-2M1077.500 0l1.800 2 1.800-2" fill="#9a9a9a"/>
<path d="M1068 9.700h5.200l3 3v9h-8.200z" fill="#fff" stroke="#b3b3b3"/><path d="M1073.200 9.700v3h3" fill="none" stroke="#b3b3b3"/><path d="M1073.500 12.800h5.800l3.200 3.200v8.500h-9z" fill="#fff" stroke="#a9a9a9"/><path d="M1079.300 12.800v3.200h3.200" fill="none" stroke="#a9a9a9"/>
<text x="1086.3" y="21.3" font-size="13" font-weight="500" fill="#3a3a3a">复制</text>
<path d="M1117.20 14.80h5.200l-2.60 3.00z" fill="#444"/>
<rect x="1071.500" y="31.500" width="10.500" height="15" fill="#fff" stroke="#9a9a9a"/><rect x="1075.500" y="33" width="5.500" height="5.500" fill="#3d7cc4"/><path d="M1079 38.500v3M1075.500 43h5.500" stroke="#555" stroke-width=".9"/><path d="M1078 40.500l1 1.300 1-1.300" fill="#555"/><path d="M1068.300 41.500q3.500-1.500 6.500 1.200l-1 3.300q-3.500 1-5-1.500z" fill="#a8560e"/><path d="M1067.300 40.300l2 1.500" stroke="#7a3a08" stroke-width="1.200"/>
<text x="1086.3" y="43.2" font-size="13" font-weight="500" fill="#3a3a3a">特性匹配</text>
<text x="1062.5" y="69" font-size="13" fill="#6b6b6b">剪切板</text>
<path d="M24 100L43.700 81H132l5.500 5L123 100z" fill="#eeeeee"/><path d="M23.500 100L43.500 80.500H131.500q2 0 3 1.500l3 3.500" fill="none" stroke="#a6a6a6" stroke-width="1"/>
<path d="M118.500 100L138.500 80.500H246.500q3 0 3 3V100z" fill="#ffffff"/><path d="M118.500 100L138.500 80.500H246.500q3 0 3 3V100" fill="none" stroke="#a6a6a6" stroke-width="1"/>
<text x="57" y="94.3" font-size="13" fill="#4a4a4a">建筑图</text>
<text x="152.8" y="94.3" font-size="13" font-weight="bold" fill="#2e2e2e">结构图</text>
<path d="M236.500 87.300l6.500 6.500M243 87.300l-6.500 6.500" stroke="#5a5a5a" stroke-width="1.500"/>
<rect x="3" y="85" width="15.500" height="16.500" fill="#ecebd8"/><path d="M4 98v-4q0-3 3-3h2" stroke="#111" stroke-width="1.300" fill="none"/><path d="M8.500 88.500l3.200 2.500-3.200 2.500z" fill="#111"/><path d="M12 87.500h5.500M14.800 87.500v6.500" stroke="#111" stroke-width="1.600"/><rect x="12" y="86.700" width="5.700" height="1.800" rx=".9" fill="none" stroke="#111" stroke-width=".8"/><rect x="3.500" y="96" width="13.500" height="4" rx="1.500" fill="#fff" stroke="#111" stroke-width="1.200"/><path d="M6 98h3M10.500 98h1.500M13 98h2" stroke="#111" stroke-width=".9"/>
<text transform="translate(5.3,102.5) rotate(90)" font-size="12.5" fill="#1a1a1a">图</text>
<text transform="translate(5.3,114.5) rotate(90)" font-size="12.5" fill="#1a1a1a">纸</text>
<path d="M26.500 751v7.500" stroke="#666" stroke-width="1.200"/><path d="M32 751l-4 3.700 4 3.700zM47.500 751l-4 3.700 4 3.700zM60 751l4 3.700-4 3.700zM75 751l4 3.700-4 3.700z" fill="#666"/><path d="M80.500 751v7.500" stroke="#666" stroke-width="1.200"/>
<path d="M132 745.500l8 16H176.500l8-16" fill="#ececec" stroke="#a0a0a0" stroke-width="1"/>
<path d="M88 745l8.200 16.500H128l8-16.500z" fill="#fff"/><path d="M88 745.500l8.200 16H128l8-16" fill="none" stroke="#8a8a8a" stroke-width="1"/>
<text x="97.6" y="757.3" font-size="13.5" font-weight="bold" fill="#2e2e2e">模型</text>
<text x="140" y="757.3" font-size="13.5" fill="#3a3a3a">布局</text>
</svg>
<span class="h" style="left:8.5px;top:22.6px;font-size:13px;width:26.0px;height:13px">直线</span>
<span class="h" style="left:45.0px;top:22.6px;font-size:13px;width:39.0px;height:13px">多段线</span>
<span class="h" style="left:100.0px;top:22.6px;font-size:13px;width:13.0px;height:13px">圆</span>
<span class="h" style="left:136.0px;top:22.6px;font-size:13px;width:26.0px;height:13px">圆弧</span>
<span class="h" style="left:178.5px;top:22.6px;font-size:13px;width:26.0px;height:13px">曲线</span>
<span class="h" style="left:149.0px;top:57.6px;font-size:13px;width:26.0px;height:13px">绘图</span>
<span class="h" style="left:392.5px;top:57.6px;font-size:13px;width:26.0px;height:13px">修改</span>
<span class="h" style="left:494.0px;top:22.6px;font-size:13px;width:26.0px;height:13px">尺寸</span>
<span class="h" style="left:536.3px;top:22.6px;font-size:13px;width:26.0px;height:13px">符号</span>
<span class="h" style="left:592.0px;top:10.1px;font-size:13px;width:26.0px;height:13px">表格</span>
<span class="h" style="left:592.0px;top:32.1px;font-size:13px;width:26.0px;height:13px">坐标</span>
<span class="h" style="left:545.6px;top:57.6px;font-size:13px;width:26.0px;height:13px">标注</span>
<span class="h" style="left:644.4px;top:22.6px;font-size:13px;width:52.0px;height:13px">样式管理</span>
<span class="h" style="left:824.4px;top:-3.1px;font-size:13px;width:26.0px;height:13px">构作</span>
<span class="t" style="left:912.30px;top:-2.46px;font-size:12px;color:#1a1a1a;letter-spacing:-.45px;">ByLayer</span>
<span class="t" style="left:806.30px;top:27.44px;font-size:12px;color:#1a1a1a;letter-spacing:-.45px;">ByLayer</span>
<span class="t" style="left:962.3px;top:27.44px;font-size:12px;color:#1a1a1a;letter-spacing:-.45px;width:32.800px;overflow:hidden;display:block">ByLayer</span>
<span class="h" style="left:813.0px;top:57.6px;font-size:13px;width:26.0px;height:13px">特性</span>
<span class="h" style="left:1030.0px;top:22.6px;font-size:13px;width:26.0px;height:13px">粘贴</span>
<span class="h" style="left:1086.3px;top:9.9px;font-size:13px;width:26.0px;height:13px">复制</span>
<span class="h" style="left:1086.3px;top:31.8px;font-size:13px;width:52.0px;height:13px">特性匹配</span>
<span class="h" style="left:1062.5px;top:57.6px;font-size:13px;width:39.0px;height:13px">剪切板</span>
<span class="h" style="left:57.0px;top:82.9px;font-size:13px;width:39.0px;height:13px">建筑图</span>
<span class="t" style="left:95.80px;top:82.53px;font-size:13px;color:#4a4a4a;letter-spacing:-.35px;">.dwg</span>
<span class="h" style="left:152.8px;top:82.9px;font-size:13px;width:39.0px;height:13px">结构图</span>
<span class="t" style="left:191.60px;top:82.53px;font-size:13px;color:#2e2e2e;font-weight:bold;">.dwg</span>
<span class="h" style="left:4px;top:103px;font-size:12px;width:13px;height:24px;white-space:normal">图纸</span>
<span class="h" style="left:97.6px;top:745.4px;font-size:13.5px;width:27.0px;height:13.5px">模型</span>
<span class="h" style="left:140.0px;top:745.4px;font-size:13.5px;width:27.0px;height:13.5px">布局</span>
<span class="t" style="left:166.80px;top:745.08px;font-size:13.5px;color:#3a3a3a;">1</span>
</body></html>
